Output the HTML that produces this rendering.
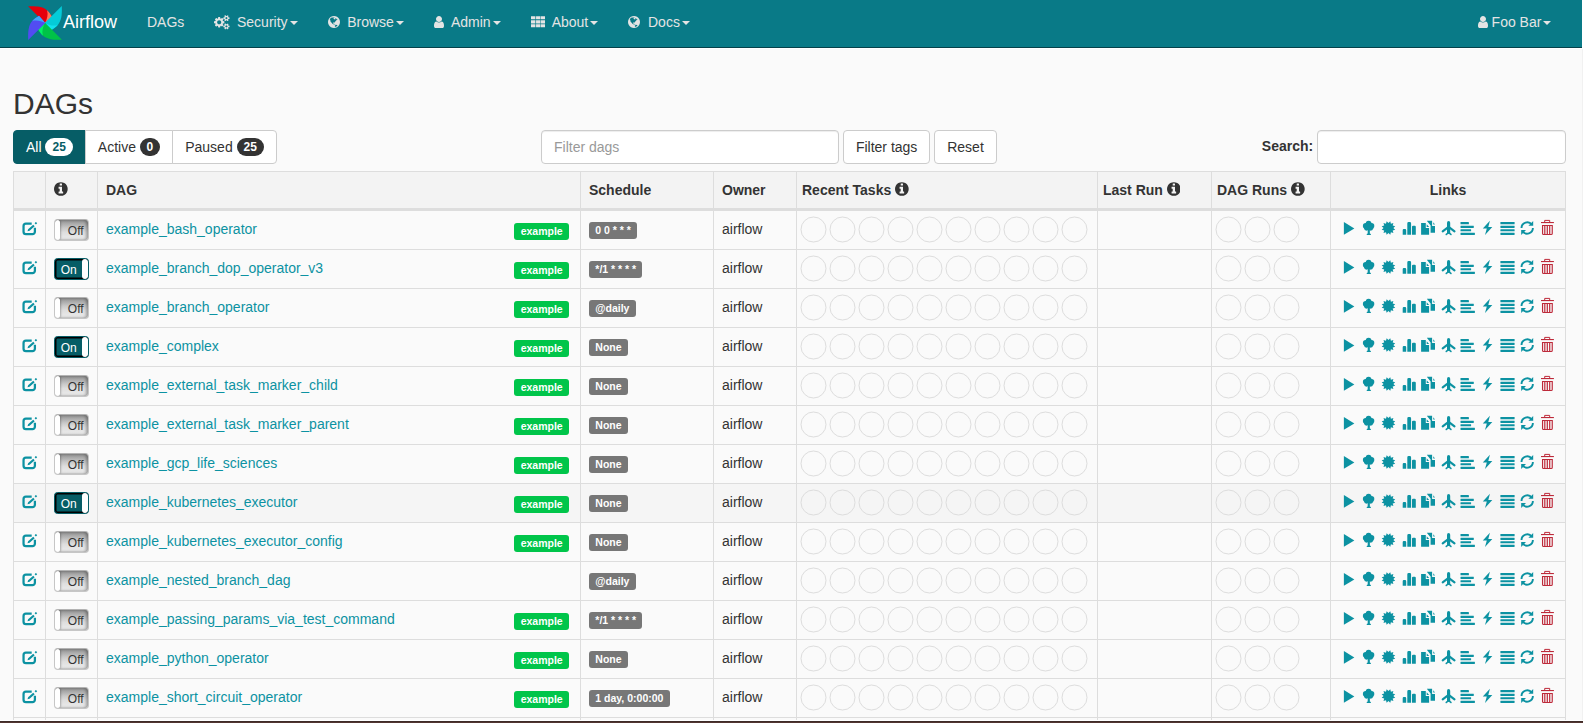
<!DOCTYPE html>
<html lang="en"><head><meta charset="utf-8"><title>Airflow - DAGs</title>
<style>
*{box-sizing:border-box}
html,body{margin:0;padding:0}
body{width:1583px;height:723px;overflow:hidden;background:#fafafa;font-family:"Liberation Sans","Helvetica Neue",Helvetica,Arial,sans-serif;font-size:14px;line-height:20px;color:#333;position:relative}
a{color:#0c92a2;text-decoration:none}
svg.ic{display:inline-block;fill:currentColor;vertical-align:middle}
.navbar{position:absolute;left:0;top:0;width:1582px;height:48px;background:#097a87;border-bottom:1px solid #05414a;box-shadow:0 1px 0 #fff}
.brand{position:absolute;left:28px;top:0;height:46px;color:#fff;font-size:18px;line-height:20px}
.brand .logo{position:absolute;left:-0.800px;top:4.600px;width:36px;height:36px}
.brand span{position:absolute;left:35px;top:12px}
.nav{list-style:none;margin:0;padding:0;position:absolute;top:0;left:0}
.nav li{position:absolute;top:0;white-space:nowrap}
.nav li a{display:block;color:#e4e4e4;line-height:20px;padding:12px 0 14px;font-size:14px}
.nav li a svg{margin-right:5px;position:relative;top:-1px}
.n1{left:147px}.n2{left:214px}.n3{left:327.600px}.n4{left:434.100px}.n5{left:530.700px}.n6{left:628.400px}
.nav .n2 svg{margin-right:7.460px;top:-0.800px}.nav .n3 svg{margin-right:7.600px}.nav .n4 svg{margin-right:6.800px}.nav .n5 svg{margin-right:6.700px;top:-1.500px}.nav .n6 svg{margin-right:7.600px}.nav .n7 svg{margin-right:3.800px}
.nav.right{left:auto}
.n7{left:1477.800px}
.caret{display:inline-block;width:0;height:0;margin-left:2px;vertical-align:middle;border-top:4px solid;border-right:4px solid transparent;border-left:4px solid transparent}
.wrap{position:absolute;left:13px;top:47px;width:1553px}
h2{font-size:30px;font-weight:500;line-height:33px;margin:0;position:absolute;left:0;top:40px;font-weight:normal;color:#333}
.bar{position:absolute;left:0;top:83px;width:1553px;height:34px}
.btn{display:inline-block;height:34px;padding:6px 12px;border:1px solid #ccc;background:#fff;color:#333;font-size:14px;line-height:20px;border-radius:4px;vertical-align:top;white-space:nowrap}
.btn-group{position:absolute;left:0;top:0;white-space:nowrap;font-size:0}
.btn-group .btn{border-radius:0;margin-left:-1px}
.btn-group .btn:first-child{border-radius:4px 0 0 4px;margin-left:0}
.btn-group .btn:last-child{border-radius:0 4px 4px 0}
.btn.primary{background:#065d66;border-color:#065d66;color:#fff}
.badge{display:inline-block;min-width:10px;padding:3px 7px;font-size:12px;font-weight:bold;color:#fff;line-height:12px;vertical-align:middle;background:#333;border-radius:10px;text-align:center;position:relative;top:-1px}
.badge.b0{padding:3px 6.550px}
.btn.pz{padding-left:12.600px;padding-right:12px}
.primary .badge{background:#fff;color:#065d66}
.filt{position:absolute;left:528px;top:0;white-space:nowrap}
.inp{display:inline-block;width:298px;height:34px;border:1px solid #ccc;border-radius:4px;background:#fff;padding:6px 12px;color:#999;vertical-align:top;box-shadow:inset 0 1px 1px rgba(0,0,0,.075)}
.ft{margin-left:3.890px}.rs{margin-left:3.890px}
.search{position:absolute;right:0;top:0;height:34px}
.search label{position:absolute;right:252.800px;top:6px;font-weight:bold;white-space:nowrap}
.inp2{position:absolute;right:0;top:0;width:249px;height:34px;border:1px solid #ccc;border-radius:4px;background:#fff;box-shadow:inset 0 1px 1px rgba(0,0,0,.075)}
table{position:absolute;left:0;top:124px;border-collapse:separate;border-spacing:0;table-layout:fixed;width:1553px;border-left:1px solid #ddd;border-bottom:1px solid #ddd}
th,td{border:0 solid #ddd;border-top-width:1px;border-right-width:1px;padding:8px 8px 0;text-align:left;vertical-align:top;line-height:20px;white-space:nowrap;overflow:hidden}
th{background:#f3f3f3;font-weight:bold;border-bottom:2px solid #ddd;height:39px}
th.tc{text-align:center}
th svg.ic{position:relative;top:-2px}
td{height:39px}
tr.hov td{background:#f5f5f5}
.c1 a{display:block;margin:2.500px 0 0 0;line-height:0}
.c1 svg{display:block}
.c3{position:relative}
.label{display:inline-block;font-size:10.500px;font-weight:bold;color:#fff;border-radius:3px;line-height:12px;padding:2px 6.300px 3px;white-space:nowrap}
.tag{position:absolute;right:11px;top:12px;background:#00c54a}
.sch{background:#777;margin-top:3px}
.tog{position:relative;width:35px;height:21.500px;border-radius:3.500px;margin:0;overflow:hidden;font-size:12px}
.tog.off{border:1px solid #c6c6c6;border-top-color:#b3b3b3;border-radius:4px;height:21.500px;background:linear-gradient(#8f8f8f 0%,#a6a6a6 15%,#c9c9c9 40%,#dedede 62%,#e7e7e7 85%,#e9e9e9 100%);box-shadow:inset -2px 0 3px rgba(0,0,0,.3),inset 0 -1px 1px rgba(0,0,0,.06)}
.tog.on{background:#065d66;border:1px solid #065d66;border-radius:3.500px;height:22px;box-shadow:inset 0 0 0 1.500px #000}
.tog .knob{position:absolute;top:0;width:6px;height:22px;background:#fff;border-radius:3px}
.tog.off .knob{left:0;top:0;width:5.200px;height:19.500px;box-shadow:1px 0 2px rgba(0,0,0,.25)}
.tog.on .knob{right:0;top:0;height:20px;width:6px;border-radius:3px}
.tog .tx{position:absolute;top:2px;line-height:20px;font-size:12px}
.tog.off .tx{left:12.800px;color:#333;top:1px}
.tog.on .tx{left:5.700px;color:#fff;top:1px}
.circs{display:block}
td.c6,td.c8{padding:0}
th.p5{padding-left:5px}
.circs circle{fill:none;stroke:#ddd;stroke-width:1}
.links{position:relative;height:20px}
.lk svg{position:absolute;display:block}
svg.trash{color:#bd2a3a;fill:#bd2a3a}
.rightcol{position:absolute;left:1582px;top:0;width:1px;height:721px;background:#f1f1f1;border-top:49px solid #fff}
.bottombar{position:absolute;left:0;top:720px;width:1583px;height:3px;background:linear-gradient(#fff 0,#fff 1px,#3f2c28 1px,#3f2c28 2px,#523531 2px)}

</style></head><body>
<nav class="navbar">
 <a class="brand"><svg class="logo" viewBox="-18 -18 36 36"><g transform="rotate(0)"><path d="M-16.900 -16.800C-12 -16.950 -8.500 -16.850 -5.700 -16.300C-2.500 -15.600 0 -14.500 1.900 -12.850C4 -11 5.700 -8.300 7.200 -6L0 0.300Z" fill="#e5000b"/><path d="M2.100 -12.650C4.100 -10.900 5.700 -8.300 7.200 -6L0 0.300C2 -3.500 3.400 -8 2.100 -12.650Z" fill="#ff7557"/></g><g transform="rotate(90)"><path d="M-16.900 -16.800C-12 -16.950 -8.500 -16.850 -5.700 -16.300C-2.500 -15.600 0 -14.500 1.900 -12.850C4 -11 5.700 -8.300 7.200 -6L0 0.300Z" fill="#04cbd8"/><path d="M2.100 -12.650C4.100 -10.900 5.700 -8.300 7.200 -6L0 0.300C2 -3.500 3.400 -8 2.100 -12.650Z" fill="#11e1ee"/></g><g transform="rotate(180)"><path d="M-16.900 -16.800C-12 -16.950 -8.500 -16.850 -5.700 -16.300C-2.500 -15.600 0 -14.500 1.900 -12.850C4 -11 5.700 -8.300 7.200 -6L0 0.300Z" fill="#00c248"/><path d="M2.100 -12.650C4.100 -10.900 5.700 -8.300 7.200 -6L0 0.300C2 -3.500 3.400 -8 2.100 -12.650Z" fill="#04f066"/></g><g transform="rotate(270)"><path d="M-16.900 -16.800C-12 -16.950 -8.500 -16.850 -5.700 -16.300C-2.500 -15.600 0 -14.500 1.900 -12.850C4 -11 5.700 -8.300 7.200 -6L0 0.300Z" fill="#524cf2"/><path d="M2.100 -12.650C4.100 -10.900 5.700 -8.300 7.200 -6L0 0.300C2 -3.500 3.400 -8 2.100 -12.650Z" fill="#41a7f9"/></g></svg><span>Airflow</span></a>
 <ul class="nav">
  <li class="n1"><a>DAGs</a></li>
  <li class="n2"><a><svg class="ic " style="width:15.54px;height:14.5px;" viewBox="0 -1536 1920 1792"><path transform="scale(1,-1) " d="M896 640q0 106 -75 181t-181 75t-181 -75t-75 -181t75 -181t181 -75t181 75t75 181zM1664 128q0 52 -38 90t-90 38t-90 -38t-38 -90q0 -53 37.5 -90.5t90.5 -37.5t90.5 37.5t37.5 90.5zM1664 1152q0 52 -38 90t-90 38t-90 -38t-38 -90q0 -53 37.5 -90.5t90.5 -37.5
t90.5 37.5t37.5 90.5zM1280 731v-185q0 -10 -7 -19.5t-16 -10.5l-155 -24q-11 -35 -32 -76q34 -48 90 -115q7 -11 7 -20q0 -12 -7 -19q-23 -30 -82.5 -89.5t-78.5 -59.5q-11 0 -21 7l-115 90q-37 -19 -77 -31q-11 -108 -23 -155q-7 -24 -30 -24h-186q-11 0 -20 7.5t-10 17.5
l-23 153q-34 10 -75 31l-118 -89q-7 -7 -20 -7q-11 0 -21 8q-144 133 -144 160q0 9 7 19q10 14 41 53t47 61q-23 44 -35 82l-152 24q-10 1 -17 9.5t-7 19.5v185q0 10 7 19.5t16 10.5l155 24q11 35 32 76q-34 48 -90 115q-7 11 -7 20q0 12 7 20q22 30 82 89t79 59q11 0 21 -7
l115 -90q34 18 77 32q11 108 23 154q7 24 30 24h186q11 0 20 -7.5t10 -17.5l23 -153q34 -10 75 -31l118 89q8 7 20 7q11 0 21 -8q144 -133 144 -160q0 -8 -7 -19q-12 -16 -42 -54t-45 -60q23 -48 34 -82l152 -23q10 -2 17 -10.5t7 -19.5zM1920 198v-140q0 -16 -149 -31
q-12 -27 -30 -52q51 -113 51 -138q0 -4 -4 -7q-122 -71 -124 -71q-8 0 -46 47t-52 68q-20 -2 -30 -2t-30 2q-14 -21 -52 -68t-46 -47q-2 0 -124 71q-4 3 -4 7q0 25 51 138q-18 25 -30 52q-149 15 -149 31v140q0 16 149 31q13 29 30 52q-51 113 -51 138q0 4 4 7q4 2 35 20
t59 34t30 16q8 0 46 -46.5t52 -67.5q20 2 30 2t30 -2q51 71 92 112l6 2q4 0 124 -70q4 -3 4 -7q0 -25 -51 -138q17 -23 30 -52q149 -15 149 -31zM1920 1222v-140q0 -16 -149 -31q-12 -27 -30 -52q51 -113 51 -138q0 -4 -4 -7q-122 -71 -124 -71q-8 0 -46 47t-52 68
q-20 -2 -30 -2t-30 2q-14 -21 -52 -68t-46 -47q-2 0 -124 71q-4 3 -4 7q0 25 51 138q-18 25 -30 52q-149 15 -149 31v140q0 16 149 31q13 29 30 52q-51 113 -51 138q0 4 4 7q4 2 35 20t59 34t30 16q8 0 46 -46.5t52 -67.5q20 2 30 2t30 -2q51 71 92 112l6 2q4 0 124 -70
q4 -3 4 -7q0 -25 -51 -138q17 -23 30 -52q149 -15 149 -31z"/></svg><span>Security</span><b class="caret"></b></a></li>
  <li class="n3"><a><svg class="ic " style="width:12.00px;height:14px;" viewBox="0 -1536 1536 1792"><path transform="scale(1,-1) " d="M768 1408q209 0 385.5 -103t279.5 -279.5t103 -385.5t-103 -385.5t-279.5 -279.5t-385.5 -103t-385.5 103t-279.5 279.5t-103 385.5t103 385.5t279.5 279.5t385.5 103zM1042 887q-2 -1 -9.5 -9.5t-13.5 -9.5q2 0 4.5 5t5 11t3.5 7q6 7 22 15q14 6 52 12q34 8 51 -11
q-2 2 9.5 13t14.5 12q3 2 15 4.5t15 7.5l2 22q-12 -1 -17.5 7t-6.5 21q0 -2 -6 -8q0 7 -4.5 8t-11.5 -1t-9 -1q-10 3 -15 7.5t-8 16.5t-4 15q-2 5 -9.5 11t-9.5 10q-1 2 -2.5 5.5t-3 6.5t-4 5.5t-5.5 2.5t-7 -5t-7.5 -10t-4.5 -5q-3 2 -6 1.5t-4.5 -1t-4.5 -3t-5 -3.5
q-3 -2 -8.5 -3t-8.5 -2q15 5 -1 11q-10 4 -16 3q9 4 7.5 12t-8.5 14h5q-1 4 -8.5 8.5t-17.5 8.5t-13 6q-8 5 -34 9.5t-33 0.5q-5 -6 -4.5 -10.5t4 -14t3.5 -12.5q1 -6 -5.5 -13t-6.5 -12q0 -7 14 -15.5t10 -21.5q-3 -8 -16 -16t-16 -12q-5 -8 -1.5 -18.5t10.5 -16.5
q2 -2 1.5 -4t-3.5 -4.5t-5.5 -4t-6.5 -3.5l-3 -2q-11 -5 -20.5 6t-13.5 26q-7 25 -16 30q-23 8 -29 -1q-5 13 -41 26q-25 9 -58 4q6 1 0 15q-7 15 -19 12q3 6 4 17.5t1 13.5q3 13 12 23q1 1 7 8.5t9.5 13.5t0.5 6q35 -4 50 11q5 5 11.5 17t10.5 17q9 6 14 5.5t14.5 -5.5
t14.5 -5q14 -1 15.5 11t-7.5 20q12 -1 3 17q-4 7 -8 9q-12 4 -27 -5q-8 -4 2 -8q-1 1 -9.5 -10.5t-16.5 -17.5t-16 5q-1 1 -5.5 13.5t-9.5 13.5q-8 0 -16 -15q3 8 -11 15t-24 8q19 12 -8 27q-7 4 -20.5 5t-19.5 -4q-5 -7 -5.5 -11.5t5 -8t10.5 -5.5t11.5 -4t8.5 -3
q14 -10 8 -14q-2 -1 -8.5 -3.5t-11.5 -4.5t-6 -4q-3 -4 0 -14t-2 -14q-5 5 -9 17.5t-7 16.5q7 -9 -25 -6l-10 1q-4 0 -16 -2t-20.5 -1t-13.5 8q-4 8 0 20q1 4 4 2q-4 3 -11 9.5t-10 8.5q-46 -15 -94 -41q6 -1 12 1q5 2 13 6.5t10 5.5q34 14 42 7l5 5q14 -16 20 -25
q-7 4 -30 1q-20 -6 -22 -12q7 -12 5 -18q-4 3 -11.5 10t-14.5 11t-15 5q-16 0 -22 -1q-146 -80 -235 -222q7 -7 12 -8q4 -1 5 -9t2.5 -11t11.5 3q9 -8 3 -19q1 1 44 -27q19 -17 21 -21q3 -11 -10 -18q-1 2 -9 9t-9 4q-3 -5 0.5 -18.5t10.5 -12.5q-7 0 -9.5 -16t-2.5 -35.5
t-1 -23.5l2 -1q-3 -12 5.5 -34.5t21.5 -19.5q-13 -3 20 -43q6 -8 8 -9q3 -2 12 -7.5t15 -10t10 -10.5q4 -5 10 -22.5t14 -23.5q-2 -6 9.5 -20t10.5 -23q-1 0 -2.5 -1t-2.5 -1q3 -7 15.5 -14t15.5 -13q1 -3 2 -10t3 -11t8 -2q2 20 -24 62q-15 25 -17 29q-3 5 -5.5 15.5
t-4.5 14.5q2 0 6 -1.5t8.5 -3.5t7.5 -4t2 -3q-3 -7 2 -17.5t12 -18.5t17 -19t12 -13q6 -6 14 -19.5t0 -13.5q9 0 20 -10.5t17 -19.5q5 -8 8 -26t5 -24q2 -7 8.5 -13.5t12.5 -9.5l16 -8t13 -7q5 -2 18.5 -10.5t21.5 -11.5q10 -4 16 -4t14.5 2.5t13.5 3.5q15 2 29 -15t21 -21
q36 -19 55 -11q-2 -1 0.5 -7.5t8 -15.5t9 -14.5t5.5 -8.5q5 -6 18 -15t18 -15q6 4 7 9q-3 -8 7 -20t18 -10q14 3 14 32q-31 -15 -49 18q0 1 -2.5 5.5t-4 8.5t-2.5 8.5t0 7.5t5 3q9 0 10 3.5t-2 12.5t-4 13q-1 8 -11 20t-12 15q-5 -9 -16 -8t-16 9q0 -1 -1.5 -5.5t-1.5 -6.5
q-13 0 -15 1q1 3 2.5 17.5t3.5 22.5q1 4 5.5 12t7.5 14.5t4 12.5t-4.5 9.5t-17.5 2.5q-19 -1 -26 -20q-1 -3 -3 -10.5t-5 -11.5t-9 -7q-7 -3 -24 -2t-24 5q-13 8 -22.5 29t-9.5 37q0 10 2.5 26.5t3 25t-5.5 24.5q3 2 9 9.5t10 10.5q2 1 4.5 1.5t4.5 0t4 1.5t3 6q-1 1 -4 3
q-3 3 -4 3q7 -3 28.5 1.5t27.5 -1.5q15 -11 22 2q0 1 -2.5 9.5t-0.5 13.5q5 -27 29 -9q3 -3 15.5 -5t17.5 -5q3 -2 7 -5.5t5.5 -4.5t5 0.5t8.5 6.5q10 -14 12 -24q11 -40 19 -44q7 -3 11 -2t4.5 9.5t0 14t-1.5 12.5l-1 8v18l-1 8q-15 3 -18.5 12t1.5 18.5t15 18.5q1 1 8 3.5
t15.5 6.5t12.5 8q21 19 15 35q7 0 11 9q-1 0 -5 3t-7.5 5t-4.5 2q9 5 2 16q5 3 7.5 11t7.5 10q9 -12 21 -2q8 8 1 16q5 7 20.5 10.5t18.5 9.5q7 -2 8 2t1 12t3 12q4 5 15 9t13 5l17 11q3 4 0 4q18 -2 31 11q10 11 -6 20q3 6 -3 9.5t-15 5.5q3 1 11.5 0.5t10.5 1.5
q15 10 -7 16q-17 5 -43 -12zM879 10q206 36 351 189q-3 3 -12.5 4.5t-12.5 3.5q-18 7 -24 8q1 7 -2.5 13t-8 9t-12.5 8t-11 7q-2 2 -7 6t-7 5.5t-7.5 4.5t-8.5 2t-10 -1l-3 -1q-3 -1 -5.5 -2.5t-5.5 -3t-4 -3t0 -2.5q-21 17 -36 22q-5 1 -11 5.5t-10.5 7t-10 1.5t-11.5 -7
q-5 -5 -6 -15t-2 -13q-7 5 0 17.5t2 18.5q-3 6 -10.5 4.5t-12 -4.5t-11.5 -8.5t-9 -6.5t-8.5 -5.5t-8.5 -7.5q-3 -4 -6 -12t-5 -11q-2 4 -11.5 6.5t-9.5 5.5q2 -10 4 -35t5 -38q7 -31 -12 -48q-27 -25 -29 -40q-4 -22 12 -26q0 -7 -8 -20.5t-7 -21.5q0 -6 2 -16z"/></svg><span>Browse</span><b class="caret"></b></a></li>
  <li class="n4"><a><svg class="ic " style="width:10.00px;height:14px;" viewBox="0 -1536 1280 1792"><path transform="scale(1,-1) " d="M1280 137q0 -109 -62.5 -187t-150.5 -78h-854q-88 0 -150.5 78t-62.5 187q0 85 8.5 160.5t31.5 152t58.5 131t94 89t134.5 34.5q131 -128 313 -128t313 128q76 0 134.5 -34.5t94 -89t58.5 -131t31.5 -152t8.5 -160.5zM1024 1024q0 -159 -112.5 -271.5t-271.5 -112.5
t-271.5 112.5t-112.5 271.5t112.5 271.5t271.5 112.5t271.5 -112.5t112.5 -271.5z"/></svg><span>Admin</span><b class="caret"></b></a></li>
  <li class="n5"><a><svg class="ic " style="width:14.3px;height:14px" viewBox="0 0 14.3 14"><path d="M0 1.3h4.4v3.05h-4.4zM5.05 1.3h4.4v3.05h-4.4zM9.95 1.3h4.35v3.05h-4.35zM0 5.15h4.4v3.25h-4.4zM5.05 5.15h4.4v3.25h-4.4zM9.95 5.15h4.35v3.25h-4.35zM0 9.2h4.4v3.1h-4.4zM5.05 9.2h4.4v3.1h-4.4zM9.95 9.2h4.35v3.1h-4.35z"/></svg><span>About</span><b class="caret"></b></a></li>
  <li class="n6"><a><svg class="ic " style="width:12.00px;height:14px;" viewBox="0 -1536 1536 1792"><path transform="scale(1,-1) " d="M768 1408q209 0 385.5 -103t279.5 -279.5t103 -385.5t-103 -385.5t-279.5 -279.5t-385.5 -103t-385.5 103t-279.5 279.5t-103 385.5t103 385.5t279.5 279.5t385.5 103zM1042 887q-2 -1 -9.5 -9.5t-13.5 -9.5q2 0 4.5 5t5 11t3.5 7q6 7 22 15q14 6 52 12q34 8 51 -11
q-2 2 9.5 13t14.5 12q3 2 15 4.5t15 7.5l2 22q-12 -1 -17.5 7t-6.5 21q0 -2 -6 -8q0 7 -4.5 8t-11.5 -1t-9 -1q-10 3 -15 7.5t-8 16.5t-4 15q-2 5 -9.5 11t-9.5 10q-1 2 -2.5 5.5t-3 6.5t-4 5.5t-5.5 2.5t-7 -5t-7.5 -10t-4.5 -5q-3 2 -6 1.5t-4.5 -1t-4.5 -3t-5 -3.5
q-3 -2 -8.5 -3t-8.5 -2q15 5 -1 11q-10 4 -16 3q9 4 7.5 12t-8.5 14h5q-1 4 -8.5 8.5t-17.5 8.5t-13 6q-8 5 -34 9.5t-33 0.5q-5 -6 -4.5 -10.5t4 -14t3.5 -12.5q1 -6 -5.5 -13t-6.5 -12q0 -7 14 -15.5t10 -21.5q-3 -8 -16 -16t-16 -12q-5 -8 -1.5 -18.5t10.5 -16.5
q2 -2 1.5 -4t-3.5 -4.5t-5.5 -4t-6.5 -3.5l-3 -2q-11 -5 -20.5 6t-13.5 26q-7 25 -16 30q-23 8 -29 -1q-5 13 -41 26q-25 9 -58 4q6 1 0 15q-7 15 -19 12q3 6 4 17.5t1 13.5q3 13 12 23q1 1 7 8.5t9.5 13.5t0.5 6q35 -4 50 11q5 5 11.5 17t10.5 17q9 6 14 5.5t14.5 -5.5
t14.5 -5q14 -1 15.5 11t-7.5 20q12 -1 3 17q-4 7 -8 9q-12 4 -27 -5q-8 -4 2 -8q-1 1 -9.5 -10.5t-16.5 -17.5t-16 5q-1 1 -5.5 13.5t-9.5 13.5q-8 0 -16 -15q3 8 -11 15t-24 8q19 12 -8 27q-7 4 -20.5 5t-19.5 -4q-5 -7 -5.5 -11.5t5 -8t10.5 -5.5t11.5 -4t8.5 -3
q14 -10 8 -14q-2 -1 -8.5 -3.5t-11.5 -4.5t-6 -4q-3 -4 0 -14t-2 -14q-5 5 -9 17.5t-7 16.5q7 -9 -25 -6l-10 1q-4 0 -16 -2t-20.5 -1t-13.5 8q-4 8 0 20q1 4 4 2q-4 3 -11 9.5t-10 8.5q-46 -15 -94 -41q6 -1 12 1q5 2 13 6.5t10 5.5q34 14 42 7l5 5q14 -16 20 -25
q-7 4 -30 1q-20 -6 -22 -12q7 -12 5 -18q-4 3 -11.5 10t-14.5 11t-15 5q-16 0 -22 -1q-146 -80 -235 -222q7 -7 12 -8q4 -1 5 -9t2.5 -11t11.5 3q9 -8 3 -19q1 1 44 -27q19 -17 21 -21q3 -11 -10 -18q-1 2 -9 9t-9 4q-3 -5 0.5 -18.5t10.5 -12.5q-7 0 -9.5 -16t-2.5 -35.5
t-1 -23.5l2 -1q-3 -12 5.5 -34.5t21.5 -19.5q-13 -3 20 -43q6 -8 8 -9q3 -2 12 -7.5t15 -10t10 -10.5q4 -5 10 -22.5t14 -23.5q-2 -6 9.5 -20t10.5 -23q-1 0 -2.5 -1t-2.5 -1q3 -7 15.5 -14t15.5 -13q1 -3 2 -10t3 -11t8 -2q2 20 -24 62q-15 25 -17 29q-3 5 -5.5 15.5
t-4.5 14.5q2 0 6 -1.5t8.5 -3.5t7.5 -4t2 -3q-3 -7 2 -17.5t12 -18.5t17 -19t12 -13q6 -6 14 -19.5t0 -13.5q9 0 20 -10.5t17 -19.5q5 -8 8 -26t5 -24q2 -7 8.5 -13.5t12.5 -9.5l16 -8t13 -7q5 -2 18.5 -10.5t21.5 -11.5q10 -4 16 -4t14.5 2.5t13.5 3.5q15 2 29 -15t21 -21
q36 -19 55 -11q-2 -1 0.5 -7.5t8 -15.5t9 -14.5t5.5 -8.5q5 -6 18 -15t18 -15q6 4 7 9q-3 -8 7 -20t18 -10q14 3 14 32q-31 -15 -49 18q0 1 -2.5 5.5t-4 8.5t-2.5 8.5t0 7.5t5 3q9 0 10 3.5t-2 12.5t-4 13q-1 8 -11 20t-12 15q-5 -9 -16 -8t-16 9q0 -1 -1.5 -5.5t-1.5 -6.5
q-13 0 -15 1q1 3 2.5 17.5t3.5 22.5q1 4 5.5 12t7.5 14.5t4 12.5t-4.5 9.5t-17.5 2.5q-19 -1 -26 -20q-1 -3 -3 -10.5t-5 -11.5t-9 -7q-7 -3 -24 -2t-24 5q-13 8 -22.5 29t-9.5 37q0 10 2.5 26.5t3 25t-5.5 24.5q3 2 9 9.5t10 10.5q2 1 4.5 1.5t4.5 0t4 1.5t3 6q-1 1 -4 3
q-3 3 -4 3q7 -3 28.5 1.5t27.5 -1.5q15 -11 22 2q0 1 -2.5 9.5t-0.5 13.5q5 -27 29 -9q3 -3 15.5 -5t17.5 -5q3 -2 7 -5.5t5.5 -4.5t5 0.5t8.5 6.5q10 -14 12 -24q11 -40 19 -44q7 -3 11 -2t4.5 9.5t0 14t-1.5 12.5l-1 8v18l-1 8q-15 3 -18.5 12t1.5 18.5t15 18.5q1 1 8 3.5
t15.5 6.5t12.5 8q21 19 15 35q7 0 11 9q-1 0 -5 3t-7.5 5t-4.5 2q9 5 2 16q5 3 7.5 11t7.5 10q9 -12 21 -2q8 8 1 16q5 7 20.5 10.5t18.5 9.5q7 -2 8 2t1 12t3 12q4 5 15 9t13 5l17 11q3 4 0 4q18 -2 31 11q10 11 -6 20q3 6 -3 9.5t-15 5.5q3 1 11.5 0.5t10.5 1.5
q15 10 -7 16q-17 5 -43 -12zM879 10q206 36 351 189q-3 3 -12.5 4.5t-12.5 3.5q-18 7 -24 8q1 7 -2.5 13t-8 9t-12.5 8t-11 7q-2 2 -7 6t-7 5.5t-7.5 4.5t-8.5 2t-10 -1l-3 -1q-3 -1 -5.5 -2.5t-5.5 -3t-4 -3t0 -2.5q-21 17 -36 22q-5 1 -11 5.5t-10.5 7t-10 1.5t-11.5 -7
q-5 -5 -6 -15t-2 -13q-7 5 0 17.5t2 18.5q-3 6 -10.5 4.5t-12 -4.5t-11.5 -8.5t-9 -6.5t-8.5 -5.5t-8.5 -7.5q-3 -4 -6 -12t-5 -11q-2 4 -11.5 6.5t-9.5 5.5q2 -10 4 -35t5 -38q7 -31 -12 -48q-27 -25 -29 -40q-4 -22 12 -26q0 -7 -8 -20.5t-7 -21.5q0 -6 2 -16z"/></svg><span>Docs</span><b class="caret"></b></a></li>
 </ul>
 <ul class="nav right"><li class="n7"><a><svg class="ic " style="width:10.00px;height:14px;" viewBox="0 -1536 1280 1792"><path transform="scale(1,-1) " d="M1280 137q0 -109 -62.5 -187t-150.5 -78h-854q-88 0 -150.5 78t-62.5 187q0 85 8.5 160.5t31.5 152t58.5 131t94 89t134.5 34.5q131 -128 313 -128t313 128q76 0 134.5 -34.5t94 -89t58.5 -131t31.5 -152t8.5 -160.5zM1024 1024q0 -159 -112.5 -271.5t-271.5 -112.5
t-271.5 112.5t-112.5 271.5t112.5 271.5t271.5 112.5t271.5 -112.5t112.5 -271.5z"/></svg><span>Foo Bar</span><b class="caret"></b></a></li></ul>
</nav>
<div class="wrap">
 <h2>DAGs</h2>
 <div class="bar">
  <div class="btn-group"><a class="btn primary">All <span class="badge">25</span></a><a class="btn">Active <span class="badge b0">0</span></a><a class="btn pz">Paused <span class="badge">25</span></a></div>
  <div class="filt"><div class="inp">Filter dags</div><a class="btn ft">Filter tags</a><a class="btn rs">Reset</a></div>
  <div class="search"><label>Search:</label><div class="inp2"></div></div>
 </div>
 <table>
  <colgroup><col style="width:32px"><col style="width:52px"><col style="width:483px"><col style="width:133px"><col style="width:83px"><col style="width:301px"><col style="width:114px"><col style="width:119px"><col style="width:235px"></colgroup>
  <thead><tr><th></th><th><svg class="ic " style="width:13.71px;height:16px;" viewBox="0 -1536 1536 1792"><path transform="scale(1,-1) " d="M1024 160v160q0 14 -9 23t-23 9h-96v512q0 14 -9 23t-23 9h-320q-14 0 -23 -9t-9 -23v-160q0 -14 9 -23t23 -9h96v-320h-96q-14 0 -23 -9t-9 -23v-160q0 -14 9 -23t23 -9h448q14 0 23 9t9 23zM896 1056v160q0 14 -9 23t-23 9h-192q-14 0 -23 -9t-9 -23v-160q0 -14 9 -23
t23 -9h192q14 0 23 9t9 23zM1536 640q0 -209 -103 -385.5t-279.5 -279.5t-385.5 -103t-385.5 103t-279.5 279.5t-103 385.5t103 385.5t279.5 279.5t385.5 103t385.5 -103t279.5 -279.5t103 -385.5z"/></svg></th><th>DAG</th><th>Schedule</th><th>Owner</th><th class="p5">Recent Tasks <svg class="ic " style="width:13.71px;height:16px;" viewBox="0 -1536 1536 1792"><path transform="scale(1,-1) " d="M1024 160v160q0 14 -9 23t-23 9h-96v512q0 14 -9 23t-23 9h-320q-14 0 -23 -9t-9 -23v-160q0 -14 9 -23t23 -9h96v-320h-96q-14 0 -23 -9t-9 -23v-160q0 -14 9 -23t23 -9h448q14 0 23 9t9 23zM896 1056v160q0 14 -9 23t-23 9h-192q-14 0 -23 -9t-9 -23v-160q0 -14 9 -23
t23 -9h192q14 0 23 9t9 23zM1536 640q0 -209 -103 -385.5t-279.5 -279.5t-385.5 -103t-385.5 103t-279.5 279.5t-103 385.5t103 385.5t279.5 279.5t385.5 103t385.5 -103t279.5 -279.5t103 -385.5z"/></svg></th><th class="p5">Last Run <svg class="ic " style="width:13.71px;height:16px;" viewBox="0 -1536 1536 1792"><path transform="scale(1,-1) " d="M1024 160v160q0 14 -9 23t-23 9h-96v512q0 14 -9 23t-23 9h-320q-14 0 -23 -9t-9 -23v-160q0 -14 9 -23t23 -9h96v-320h-96q-14 0 -23 -9t-9 -23v-160q0 -14 9 -23t23 -9h448q14 0 23 9t9 23zM896 1056v160q0 14 -9 23t-23 9h-192q-14 0 -23 -9t-9 -23v-160q0 -14 9 -23
t23 -9h192q14 0 23 9t9 23zM1536 640q0 -209 -103 -385.5t-279.5 -279.5t-385.5 -103t-385.5 103t-279.5 279.5t-103 385.5t103 385.5t279.5 279.5t385.5 103t385.5 -103t279.5 -279.5t103 -385.5z"/></svg></th><th class="p5">DAG Runs <svg class="ic " style="width:13.71px;height:16px;" viewBox="0 -1536 1536 1792"><path transform="scale(1,-1) " d="M1024 160v160q0 14 -9 23t-23 9h-96v512q0 14 -9 23t-23 9h-320q-14 0 -23 -9t-9 -23v-160q0 -14 9 -23t23 -9h96v-320h-96q-14 0 -23 -9t-9 -23v-160q0 -14 9 -23t23 -9h448q14 0 23 9t9 23zM896 1056v160q0 14 -9 23t-23 9h-192q-14 0 -23 -9t-9 -23v-160q0 -14 9 -23
t23 -9h192q14 0 23 9t9 23zM1536 640q0 -209 -103 -385.5t-279.5 -279.5t-385.5 -103t-385.5 103t-279.5 279.5t-103 385.5t103 385.5t279.5 279.5t385.5 103t385.5 -103t279.5 -279.5t103 -385.5z"/></svg></th><th class="tc">Links</th></tr></thead>
  <tbody>
<tr><td class="c1"><a><svg class="ic edit" style="width:16px;height:15px" viewBox="0 0 16 15"><path d="M9.700 1.550H3.950A2.400 2.400 0 0 0 1.550 3.950v5.750A2.400 2.400 0 0 0 3.950 12.100h6.550A2.400 2.400 0 0 0 12.900 9.700V5.700" fill="none" stroke="currentColor" stroke-width="2.250"/><path d="M5.500 9.200L6.100 7.200L11.200 2.700L12.700 4.300L7.600 8.800Z M13.900 -0.100L15.200 1.200L13.900 2.500L12.600 1.200Z"/></svg></a></td><td class="c2"><div class="tog off"><span class="knob"></span><span class="tx">Off</span></div></td><td class="c3"><a class="dag">example_bash_operator</a><span class="label tag">example</span></td><td class="c4"><span class="label sch">0 0 * * *</span></td><td class="c5">airflow</td><td class="c6"><svg class="circs" width="300" height="36" viewBox="0 0 300 36"><circle cx="16.5" cy="18.500" r="12.500"/><circle cx="45.5" cy="18.500" r="12.500"/><circle cx="74.5" cy="18.500" r="12.500"/><circle cx="103.5" cy="18.500" r="12.500"/><circle cx="132.5" cy="18.500" r="12.500"/><circle cx="161.5" cy="18.500" r="12.500"/><circle cx="190.5" cy="18.500" r="12.500"/><circle cx="219.5" cy="18.500" r="12.500"/><circle cx="248.5" cy="18.500" r="12.500"/><circle cx="277.5" cy="18.500" r="12.500"/></svg></td><td class="c7"></td><td class="c8"><svg class="circs" width="100" height="36" viewBox="0 0 100 36"><circle cx="16.5" cy="18.500" r="12.500"/><circle cx="45.5" cy="18.500" r="12.500"/><circle cx="74.5" cy="18.500" r="12.500"/></svg></td><td class="c9"><div class="links"><a class="lk"><svg class="ic " style="left:4px;top:1px;width:16px;height:16px" viewBox="1343 220 16 16"><path d="M1343.900 222.100L1354.350 228.450L1343.900 234.800Z"/></svg></a><a class="lk"><svg class="ic " style="left:23px;top:1px;width:16px;height:16px" viewBox="1362 220 16 16"><circle cx="1368.600" cy="223.700" r="2.900"/><circle cx="1365.700" cy="225.900" r="2.800"/><circle cx="1371.500" cy="225.900" r="2.800"/><circle cx="1366.500" cy="228.300" r="2.400"/><circle cx="1370.700" cy="228.300" r="2.400"/><circle cx="1368.600" cy="226.500" r="3.600"/><path d="M1367.700 229.500H1369.850V233.500L1370.850 233.900V234.950H1366.750V233.900L1367.700 233.500Z"/></svg></a><a class="lk"><svg class="ic " style="left:42px;top:1px;width:16px;height:16px" viewBox="1381 220 16 16"><polygon points="1390.26,221.24 1390.90,223.76 1393.40,223.05 1392.69,225.55 1395.21,226.19 1393.35,228.00 1395.21,229.81 1392.69,230.45 1393.40,232.95 1390.90,232.24 1390.26,234.76 1388.45,232.90 1386.64,234.76 1386.00,232.24 1383.50,232.95 1384.21,230.45 1381.69,229.81 1383.55,228.00 1381.69,226.19 1384.21,225.55 1383.50,223.05 1386.00,223.76 1386.64,221.24 1388.45,223.10"/></svg></a><a class="lk"><svg class="ic " style="left:63px;top:1px;width:16px;height:16px" viewBox="1402 220 16 16"><path d="M1402.700 234.800v-4.600a1.100 1.100 0 0 1 1.100-1.100h1.300a1.100 1.100 0 0 1 1.100 1.100v4.600z M1407.300 234.800v-11.400a1.300 1.300 0 0 1 1.300-1.300h1.200a1.300 1.300 0 0 1 1.300 1.300v11.400z M1412 234.800v-8a1.100 1.100 0 0 1 1.100-1.100h1.600a1.100 1.100 0 0 1 1.100 1.100v8z"/></svg></a><a class="lk"><svg class="ic " style="left:81px;top:1px;width:16px;height:16px" viewBox="1420 220 16 16"><path d="M1421.100 223.100h4.700v4.900h3.300v6.800h-8z M1426.700 224.200l2.400 2.900h-2.400z M1427 220.800H1432.100V226H1435V232.700H1430.600V225.600L1427 221.100z M1433.300 222.200l1.700 2.300h-1.700z"/></svg></a><a class="lk"><svg class="ic " style="left:102px;top:1px;width:16px;height:16px" viewBox="1441 220 16 16"><rect x="1447" y="221.100" width="3.200" height="12.700" rx="1.600"/><path d="M1448.600 226.800L1442.700 231.400M1448.600 226.800L1454.500 231.400" fill="none" stroke="currentColor" stroke-width="2.100" stroke-linecap="round"/><path d="M1448.600 232.700L1446.300 234.400M1448.600 232.700L1450.900 234.400" fill="none" stroke="currentColor" stroke-width="1.600" stroke-linecap="round"/></svg></a><a class="lk"><svg class="ic " style="left:121px;top:1px;width:16px;height:16px" viewBox="1460 220 16 16"><rect x="1460.5" y="222.1" width="8.4" height="2.200" rx="0.35"/><rect x="1460.5" y="225.75" width="13.3" height="2.200" rx="0.35"/><rect x="1460.5" y="229.15" width="10.6" height="2.200" rx="0.35"/><rect x="1460.5" y="232.75" width="14.4" height="2.200" rx="0.35"/></svg></a><a class="lk"><svg class="ic " style="left:143px;top:1px;width:16px;height:16px" viewBox="1482 220 16 16"><path d="M1489.900 220.800L1482.800 228.500H1486.800L1485 235.100L1492.300 226.900H1488.300z"/></svg></a><a class="lk"><svg class="ic " style="left:161px;top:1px;width:16px;height:16px" viewBox="1500 220 16 16"><rect x="1500.4" y="222.1" width="14.2" height="2.200" rx="0.35"/><rect x="1500.4" y="225.75" width="14.2" height="2.200" rx="0.35"/><rect x="1500.4" y="229.15" width="14.2" height="2.200" rx="0.35"/><rect x="1500.4" y="232.75" width="14.2" height="2.200" rx="0.35"/></svg></a><a class="lk"><svg class="ic " style="left:181px;top:1px;width:16px;height:16px" viewBox="1520 220 16 16"><path d="M1521.500 227.900a5.700 5.700 0 0 1 10.300-3.300" fill="none" stroke="currentColor" stroke-width="1.900"/><path d="M1533.200 221v4.800h-4.800z"/><path d="M1532.900 228a5.700 5.700 0 0 1-10.300 3.300" fill="none" stroke="currentColor" stroke-width="1.900"/><path d="M1521.200 234.900v-4.800h4.800z"/></svg></a><a class="lk"><svg class="ic trash" style="left:201px;top:0px;width:16px;height:17px" viewBox="1540 219 16 17"><path d="M1544.700 222.400v-2h5v2" fill="none" stroke="currentColor" stroke-width="1"/><rect x="1541" y="222" width="12.900" height="1.100"/><path d="M1542.550 225.450h9.700v8a1 1 0 0 1-1 1h-7.700a1 1 0 0 1-1-1z" fill="none" stroke="currentColor" stroke-width="1.150"/><path d="M1544.800 225.500v9M1547.300 225.500v9M1549.700 225.500v9" fill="none" stroke="currentColor" stroke-width="1.200"/></svg></a></div></td></tr>
<tr><td class="c1"><a><svg class="ic edit" style="width:16px;height:15px" viewBox="0 0 16 15"><path d="M9.700 1.550H3.950A2.400 2.400 0 0 0 1.550 3.950v5.750A2.400 2.400 0 0 0 3.950 12.100h6.550A2.400 2.400 0 0 0 12.900 9.700V5.700" fill="none" stroke="currentColor" stroke-width="2.250"/><path d="M5.500 9.200L6.100 7.200L11.200 2.700L12.700 4.300L7.600 8.800Z M13.900 -0.100L15.200 1.200L13.900 2.500L12.600 1.200Z"/></svg></a></td><td class="c2"><div class="tog on"><span class="knob"></span><span class="tx">On</span></div></td><td class="c3"><a class="dag">example_branch_dop_operator_v3</a><span class="label tag">example</span></td><td class="c4"><span class="label sch">*/1 * * * *</span></td><td class="c5">airflow</td><td class="c6"><svg class="circs" width="300" height="36" viewBox="0 0 300 36"><circle cx="16.5" cy="18.500" r="12.500"/><circle cx="45.5" cy="18.500" r="12.500"/><circle cx="74.5" cy="18.500" r="12.500"/><circle cx="103.5" cy="18.500" r="12.500"/><circle cx="132.5" cy="18.500" r="12.500"/><circle cx="161.5" cy="18.500" r="12.500"/><circle cx="190.5" cy="18.500" r="12.500"/><circle cx="219.5" cy="18.500" r="12.500"/><circle cx="248.5" cy="18.500" r="12.500"/><circle cx="277.5" cy="18.500" r="12.500"/></svg></td><td class="c7"></td><td class="c8"><svg class="circs" width="100" height="36" viewBox="0 0 100 36"><circle cx="16.5" cy="18.500" r="12.500"/><circle cx="45.5" cy="18.500" r="12.500"/><circle cx="74.5" cy="18.500" r="12.500"/></svg></td><td class="c9"><div class="links"><a class="lk"><svg class="ic " style="left:4px;top:1px;width:16px;height:16px" viewBox="1343 220 16 16"><path d="M1343.900 222.100L1354.350 228.450L1343.900 234.800Z"/></svg></a><a class="lk"><svg class="ic " style="left:23px;top:1px;width:16px;height:16px" viewBox="1362 220 16 16"><circle cx="1368.600" cy="223.700" r="2.900"/><circle cx="1365.700" cy="225.900" r="2.800"/><circle cx="1371.500" cy="225.900" r="2.800"/><circle cx="1366.500" cy="228.300" r="2.400"/><circle cx="1370.700" cy="228.300" r="2.400"/><circle cx="1368.600" cy="226.500" r="3.600"/><path d="M1367.700 229.500H1369.850V233.500L1370.850 233.900V234.950H1366.750V233.900L1367.700 233.500Z"/></svg></a><a class="lk"><svg class="ic " style="left:42px;top:1px;width:16px;height:16px" viewBox="1381 220 16 16"><polygon points="1390.26,221.24 1390.90,223.76 1393.40,223.05 1392.69,225.55 1395.21,226.19 1393.35,228.00 1395.21,229.81 1392.69,230.45 1393.40,232.95 1390.90,232.24 1390.26,234.76 1388.45,232.90 1386.64,234.76 1386.00,232.24 1383.50,232.95 1384.21,230.45 1381.69,229.81 1383.55,228.00 1381.69,226.19 1384.21,225.55 1383.50,223.05 1386.00,223.76 1386.64,221.24 1388.45,223.10"/></svg></a><a class="lk"><svg class="ic " style="left:63px;top:1px;width:16px;height:16px" viewBox="1402 220 16 16"><path d="M1402.700 234.800v-4.600a1.100 1.100 0 0 1 1.100-1.100h1.300a1.100 1.100 0 0 1 1.100 1.100v4.600z M1407.300 234.800v-11.400a1.300 1.300 0 0 1 1.300-1.300h1.200a1.300 1.300 0 0 1 1.300 1.300v11.400z M1412 234.800v-8a1.100 1.100 0 0 1 1.100-1.100h1.600a1.100 1.100 0 0 1 1.100 1.100v8z"/></svg></a><a class="lk"><svg class="ic " style="left:81px;top:1px;width:16px;height:16px" viewBox="1420 220 16 16"><path d="M1421.100 223.100h4.700v4.900h3.300v6.800h-8z M1426.700 224.200l2.400 2.900h-2.400z M1427 220.800H1432.100V226H1435V232.700H1430.600V225.600L1427 221.100z M1433.300 222.200l1.700 2.300h-1.700z"/></svg></a><a class="lk"><svg class="ic " style="left:102px;top:1px;width:16px;height:16px" viewBox="1441 220 16 16"><rect x="1447" y="221.100" width="3.200" height="12.700" rx="1.600"/><path d="M1448.600 226.800L1442.700 231.400M1448.600 226.800L1454.500 231.400" fill="none" stroke="currentColor" stroke-width="2.100" stroke-linecap="round"/><path d="M1448.600 232.700L1446.300 234.400M1448.600 232.700L1450.900 234.400" fill="none" stroke="currentColor" stroke-width="1.600" stroke-linecap="round"/></svg></a><a class="lk"><svg class="ic " style="left:121px;top:1px;width:16px;height:16px" viewBox="1460 220 16 16"><rect x="1460.5" y="222.1" width="8.4" height="2.200" rx="0.35"/><rect x="1460.5" y="225.75" width="13.3" height="2.200" rx="0.35"/><rect x="1460.5" y="229.15" width="10.6" height="2.200" rx="0.35"/><rect x="1460.5" y="232.75" width="14.4" height="2.200" rx="0.35"/></svg></a><a class="lk"><svg class="ic " style="left:143px;top:1px;width:16px;height:16px" viewBox="1482 220 16 16"><path d="M1489.900 220.800L1482.800 228.500H1486.800L1485 235.100L1492.300 226.900H1488.300z"/></svg></a><a class="lk"><svg class="ic " style="left:161px;top:1px;width:16px;height:16px" viewBox="1500 220 16 16"><rect x="1500.4" y="222.1" width="14.2" height="2.200" rx="0.35"/><rect x="1500.4" y="225.75" width="14.2" height="2.200" rx="0.35"/><rect x="1500.4" y="229.15" width="14.2" height="2.200" rx="0.35"/><rect x="1500.4" y="232.75" width="14.2" height="2.200" rx="0.35"/></svg></a><a class="lk"><svg class="ic " style="left:181px;top:1px;width:16px;height:16px" viewBox="1520 220 16 16"><path d="M1521.500 227.900a5.700 5.700 0 0 1 10.300-3.300" fill="none" stroke="currentColor" stroke-width="1.900"/><path d="M1533.200 221v4.800h-4.800z"/><path d="M1532.900 228a5.700 5.700 0 0 1-10.300 3.300" fill="none" stroke="currentColor" stroke-width="1.900"/><path d="M1521.200 234.900v-4.800h4.800z"/></svg></a><a class="lk"><svg class="ic trash" style="left:201px;top:0px;width:16px;height:17px" viewBox="1540 219 16 17"><path d="M1544.700 222.400v-2h5v2" fill="none" stroke="currentColor" stroke-width="1"/><rect x="1541" y="222" width="12.900" height="1.100"/><path d="M1542.550 225.450h9.700v8a1 1 0 0 1-1 1h-7.700a1 1 0 0 1-1-1z" fill="none" stroke="currentColor" stroke-width="1.150"/><path d="M1544.800 225.500v9M1547.300 225.500v9M1549.700 225.500v9" fill="none" stroke="currentColor" stroke-width="1.200"/></svg></a></div></td></tr>
<tr><td class="c1"><a><svg class="ic edit" style="width:16px;height:15px" viewBox="0 0 16 15"><path d="M9.700 1.550H3.950A2.400 2.400 0 0 0 1.550 3.950v5.750A2.400 2.400 0 0 0 3.950 12.100h6.550A2.400 2.400 0 0 0 12.900 9.700V5.700" fill="none" stroke="currentColor" stroke-width="2.250"/><path d="M5.500 9.200L6.100 7.200L11.200 2.700L12.700 4.300L7.600 8.800Z M13.900 -0.100L15.200 1.200L13.900 2.500L12.600 1.200Z"/></svg></a></td><td class="c2"><div class="tog off"><span class="knob"></span><span class="tx">Off</span></div></td><td class="c3"><a class="dag">example_branch_operator</a><span class="label tag">example</span></td><td class="c4"><span class="label sch">@daily</span></td><td class="c5">airflow</td><td class="c6"><svg class="circs" width="300" height="36" viewBox="0 0 300 36"><circle cx="16.5" cy="18.500" r="12.500"/><circle cx="45.5" cy="18.500" r="12.500"/><circle cx="74.5" cy="18.500" r="12.500"/><circle cx="103.5" cy="18.500" r="12.500"/><circle cx="132.5" cy="18.500" r="12.500"/><circle cx="161.5" cy="18.500" r="12.500"/><circle cx="190.5" cy="18.500" r="12.500"/><circle cx="219.5" cy="18.500" r="12.500"/><circle cx="248.5" cy="18.500" r="12.500"/><circle cx="277.5" cy="18.500" r="12.500"/></svg></td><td class="c7"></td><td class="c8"><svg class="circs" width="100" height="36" viewBox="0 0 100 36"><circle cx="16.5" cy="18.500" r="12.500"/><circle cx="45.5" cy="18.500" r="12.500"/><circle cx="74.5" cy="18.500" r="12.500"/></svg></td><td class="c9"><div class="links"><a class="lk"><svg class="ic " style="left:4px;top:1px;width:16px;height:16px" viewBox="1343 220 16 16"><path d="M1343.900 222.100L1354.350 228.450L1343.900 234.800Z"/></svg></a><a class="lk"><svg class="ic " style="left:23px;top:1px;width:16px;height:16px" viewBox="1362 220 16 16"><circle cx="1368.600" cy="223.700" r="2.900"/><circle cx="1365.700" cy="225.900" r="2.800"/><circle cx="1371.500" cy="225.900" r="2.800"/><circle cx="1366.500" cy="228.300" r="2.400"/><circle cx="1370.700" cy="228.300" r="2.400"/><circle cx="1368.600" cy="226.500" r="3.600"/><path d="M1367.700 229.500H1369.850V233.500L1370.850 233.900V234.950H1366.750V233.900L1367.700 233.500Z"/></svg></a><a class="lk"><svg class="ic " style="left:42px;top:1px;width:16px;height:16px" viewBox="1381 220 16 16"><polygon points="1390.26,221.24 1390.90,223.76 1393.40,223.05 1392.69,225.55 1395.21,226.19 1393.35,228.00 1395.21,229.81 1392.69,230.45 1393.40,232.95 1390.90,232.24 1390.26,234.76 1388.45,232.90 1386.64,234.76 1386.00,232.24 1383.50,232.95 1384.21,230.45 1381.69,229.81 1383.55,228.00 1381.69,226.19 1384.21,225.55 1383.50,223.05 1386.00,223.76 1386.64,221.24 1388.45,223.10"/></svg></a><a class="lk"><svg class="ic " style="left:63px;top:1px;width:16px;height:16px" viewBox="1402 220 16 16"><path d="M1402.700 234.800v-4.600a1.100 1.100 0 0 1 1.100-1.100h1.300a1.100 1.100 0 0 1 1.100 1.100v4.600z M1407.300 234.800v-11.400a1.300 1.300 0 0 1 1.300-1.300h1.200a1.300 1.300 0 0 1 1.300 1.300v11.400z M1412 234.800v-8a1.100 1.100 0 0 1 1.100-1.100h1.600a1.100 1.100 0 0 1 1.100 1.100v8z"/></svg></a><a class="lk"><svg class="ic " style="left:81px;top:1px;width:16px;height:16px" viewBox="1420 220 16 16"><path d="M1421.100 223.100h4.700v4.900h3.300v6.800h-8z M1426.700 224.200l2.400 2.900h-2.400z M1427 220.800H1432.100V226H1435V232.700H1430.600V225.600L1427 221.100z M1433.300 222.200l1.700 2.300h-1.700z"/></svg></a><a class="lk"><svg class="ic " style="left:102px;top:1px;width:16px;height:16px" viewBox="1441 220 16 16"><rect x="1447" y="221.100" width="3.200" height="12.700" rx="1.600"/><path d="M1448.600 226.800L1442.700 231.400M1448.600 226.800L1454.500 231.400" fill="none" stroke="currentColor" stroke-width="2.100" stroke-linecap="round"/><path d="M1448.600 232.700L1446.300 234.400M1448.600 232.700L1450.900 234.400" fill="none" stroke="currentColor" stroke-width="1.600" stroke-linecap="round"/></svg></a><a class="lk"><svg class="ic " style="left:121px;top:1px;width:16px;height:16px" viewBox="1460 220 16 16"><rect x="1460.5" y="222.1" width="8.4" height="2.200" rx="0.35"/><rect x="1460.5" y="225.75" width="13.3" height="2.200" rx="0.35"/><rect x="1460.5" y="229.15" width="10.6" height="2.200" rx="0.35"/><rect x="1460.5" y="232.75" width="14.4" height="2.200" rx="0.35"/></svg></a><a class="lk"><svg class="ic " style="left:143px;top:1px;width:16px;height:16px" viewBox="1482 220 16 16"><path d="M1489.900 220.800L1482.800 228.500H1486.800L1485 235.100L1492.300 226.900H1488.300z"/></svg></a><a class="lk"><svg class="ic " style="left:161px;top:1px;width:16px;height:16px" viewBox="1500 220 16 16"><rect x="1500.4" y="222.1" width="14.2" height="2.200" rx="0.35"/><rect x="1500.4" y="225.75" width="14.2" height="2.200" rx="0.35"/><rect x="1500.4" y="229.15" width="14.2" height="2.200" rx="0.35"/><rect x="1500.4" y="232.75" width="14.2" height="2.200" rx="0.35"/></svg></a><a class="lk"><svg class="ic " style="left:181px;top:1px;width:16px;height:16px" viewBox="1520 220 16 16"><path d="M1521.500 227.900a5.700 5.700 0 0 1 10.300-3.300" fill="none" stroke="currentColor" stroke-width="1.900"/><path d="M1533.200 221v4.800h-4.800z"/><path d="M1532.900 228a5.700 5.700 0 0 1-10.300 3.300" fill="none" stroke="currentColor" stroke-width="1.900"/><path d="M1521.200 234.900v-4.800h4.800z"/></svg></a><a class="lk"><svg class="ic trash" style="left:201px;top:0px;width:16px;height:17px" viewBox="1540 219 16 17"><path d="M1544.700 222.400v-2h5v2" fill="none" stroke="currentColor" stroke-width="1"/><rect x="1541" y="222" width="12.900" height="1.100"/><path d="M1542.550 225.450h9.700v8a1 1 0 0 1-1 1h-7.700a1 1 0 0 1-1-1z" fill="none" stroke="currentColor" stroke-width="1.150"/><path d="M1544.800 225.500v9M1547.300 225.500v9M1549.700 225.500v9" fill="none" stroke="currentColor" stroke-width="1.200"/></svg></a></div></td></tr>
<tr><td class="c1"><a><svg class="ic edit" style="width:16px;height:15px" viewBox="0 0 16 15"><path d="M9.700 1.550H3.950A2.400 2.400 0 0 0 1.550 3.950v5.750A2.400 2.400 0 0 0 3.950 12.100h6.550A2.400 2.400 0 0 0 12.900 9.700V5.700" fill="none" stroke="currentColor" stroke-width="2.250"/><path d="M5.500 9.200L6.100 7.200L11.200 2.700L12.700 4.300L7.600 8.800Z M13.900 -0.100L15.200 1.200L13.900 2.500L12.600 1.200Z"/></svg></a></td><td class="c2"><div class="tog on"><span class="knob"></span><span class="tx">On</span></div></td><td class="c3"><a class="dag">example_complex</a><span class="label tag">example</span></td><td class="c4"><span class="label sch">None</span></td><td class="c5">airflow</td><td class="c6"><svg class="circs" width="300" height="36" viewBox="0 0 300 36"><circle cx="16.5" cy="18.500" r="12.500"/><circle cx="45.5" cy="18.500" r="12.500"/><circle cx="74.5" cy="18.500" r="12.500"/><circle cx="103.5" cy="18.500" r="12.500"/><circle cx="132.5" cy="18.500" r="12.500"/><circle cx="161.5" cy="18.500" r="12.500"/><circle cx="190.5" cy="18.500" r="12.500"/><circle cx="219.5" cy="18.500" r="12.500"/><circle cx="248.5" cy="18.500" r="12.500"/><circle cx="277.5" cy="18.500" r="12.500"/></svg></td><td class="c7"></td><td class="c8"><svg class="circs" width="100" height="36" viewBox="0 0 100 36"><circle cx="16.5" cy="18.500" r="12.500"/><circle cx="45.5" cy="18.500" r="12.500"/><circle cx="74.5" cy="18.500" r="12.500"/></svg></td><td class="c9"><div class="links"><a class="lk"><svg class="ic " style="left:4px;top:1px;width:16px;height:16px" viewBox="1343 220 16 16"><path d="M1343.900 222.100L1354.350 228.450L1343.900 234.800Z"/></svg></a><a class="lk"><svg class="ic " style="left:23px;top:1px;width:16px;height:16px" viewBox="1362 220 16 16"><circle cx="1368.600" cy="223.700" r="2.900"/><circle cx="1365.700" cy="225.900" r="2.800"/><circle cx="1371.500" cy="225.900" r="2.800"/><circle cx="1366.500" cy="228.300" r="2.400"/><circle cx="1370.700" cy="228.300" r="2.400"/><circle cx="1368.600" cy="226.500" r="3.600"/><path d="M1367.700 229.500H1369.850V233.500L1370.850 233.900V234.950H1366.750V233.900L1367.700 233.500Z"/></svg></a><a class="lk"><svg class="ic " style="left:42px;top:1px;width:16px;height:16px" viewBox="1381 220 16 16"><polygon points="1390.26,221.24 1390.90,223.76 1393.40,223.05 1392.69,225.55 1395.21,226.19 1393.35,228.00 1395.21,229.81 1392.69,230.45 1393.40,232.95 1390.90,232.24 1390.26,234.76 1388.45,232.90 1386.64,234.76 1386.00,232.24 1383.50,232.95 1384.21,230.45 1381.69,229.81 1383.55,228.00 1381.69,226.19 1384.21,225.55 1383.50,223.05 1386.00,223.76 1386.64,221.24 1388.45,223.10"/></svg></a><a class="lk"><svg class="ic " style="left:63px;top:1px;width:16px;height:16px" viewBox="1402 220 16 16"><path d="M1402.700 234.800v-4.600a1.100 1.100 0 0 1 1.100-1.100h1.300a1.100 1.100 0 0 1 1.100 1.100v4.600z M1407.300 234.800v-11.400a1.300 1.300 0 0 1 1.300-1.300h1.200a1.300 1.300 0 0 1 1.300 1.300v11.400z M1412 234.800v-8a1.100 1.100 0 0 1 1.100-1.100h1.600a1.100 1.100 0 0 1 1.100 1.100v8z"/></svg></a><a class="lk"><svg class="ic " style="left:81px;top:1px;width:16px;height:16px" viewBox="1420 220 16 16"><path d="M1421.100 223.100h4.700v4.900h3.300v6.800h-8z M1426.700 224.200l2.400 2.900h-2.400z M1427 220.800H1432.100V226H1435V232.700H1430.600V225.600L1427 221.100z M1433.300 222.200l1.700 2.300h-1.700z"/></svg></a><a class="lk"><svg class="ic " style="left:102px;top:1px;width:16px;height:16px" viewBox="1441 220 16 16"><rect x="1447" y="221.100" width="3.200" height="12.700" rx="1.600"/><path d="M1448.600 226.800L1442.700 231.400M1448.600 226.800L1454.500 231.400" fill="none" stroke="currentColor" stroke-width="2.100" stroke-linecap="round"/><path d="M1448.600 232.700L1446.300 234.400M1448.600 232.700L1450.900 234.400" fill="none" stroke="currentColor" stroke-width="1.600" stroke-linecap="round"/></svg></a><a class="lk"><svg class="ic " style="left:121px;top:1px;width:16px;height:16px" viewBox="1460 220 16 16"><rect x="1460.5" y="222.1" width="8.4" height="2.200" rx="0.35"/><rect x="1460.5" y="225.75" width="13.3" height="2.200" rx="0.35"/><rect x="1460.5" y="229.15" width="10.6" height="2.200" rx="0.35"/><rect x="1460.5" y="232.75" width="14.4" height="2.200" rx="0.35"/></svg></a><a class="lk"><svg class="ic " style="left:143px;top:1px;width:16px;height:16px" viewBox="1482 220 16 16"><path d="M1489.900 220.800L1482.800 228.500H1486.800L1485 235.100L1492.300 226.900H1488.300z"/></svg></a><a class="lk"><svg class="ic " style="left:161px;top:1px;width:16px;height:16px" viewBox="1500 220 16 16"><rect x="1500.4" y="222.1" width="14.2" height="2.200" rx="0.35"/><rect x="1500.4" y="225.75" width="14.2" height="2.200" rx="0.35"/><rect x="1500.4" y="229.15" width="14.2" height="2.200" rx="0.35"/><rect x="1500.4" y="232.75" width="14.2" height="2.200" rx="0.35"/></svg></a><a class="lk"><svg class="ic " style="left:181px;top:1px;width:16px;height:16px" viewBox="1520 220 16 16"><path d="M1521.500 227.900a5.700 5.700 0 0 1 10.300-3.300" fill="none" stroke="currentColor" stroke-width="1.900"/><path d="M1533.200 221v4.800h-4.800z"/><path d="M1532.900 228a5.700 5.700 0 0 1-10.300 3.300" fill="none" stroke="currentColor" stroke-width="1.900"/><path d="M1521.200 234.900v-4.800h4.800z"/></svg></a><a class="lk"><svg class="ic trash" style="left:201px;top:0px;width:16px;height:17px" viewBox="1540 219 16 17"><path d="M1544.700 222.400v-2h5v2" fill="none" stroke="currentColor" stroke-width="1"/><rect x="1541" y="222" width="12.900" height="1.100"/><path d="M1542.550 225.450h9.700v8a1 1 0 0 1-1 1h-7.700a1 1 0 0 1-1-1z" fill="none" stroke="currentColor" stroke-width="1.150"/><path d="M1544.800 225.500v9M1547.300 225.500v9M1549.700 225.500v9" fill="none" stroke="currentColor" stroke-width="1.200"/></svg></a></div></td></tr>
<tr><td class="c1"><a><svg class="ic edit" style="width:16px;height:15px" viewBox="0 0 16 15"><path d="M9.700 1.550H3.950A2.400 2.400 0 0 0 1.550 3.950v5.750A2.400 2.400 0 0 0 3.950 12.100h6.550A2.400 2.400 0 0 0 12.900 9.700V5.700" fill="none" stroke="currentColor" stroke-width="2.250"/><path d="M5.500 9.200L6.100 7.200L11.200 2.700L12.700 4.300L7.600 8.800Z M13.900 -0.100L15.200 1.200L13.900 2.500L12.600 1.200Z"/></svg></a></td><td class="c2"><div class="tog off"><span class="knob"></span><span class="tx">Off</span></div></td><td class="c3"><a class="dag">example_external_task_marker_child</a><span class="label tag">example</span></td><td class="c4"><span class="label sch">None</span></td><td class="c5">airflow</td><td class="c6"><svg class="circs" width="300" height="36" viewBox="0 0 300 36"><circle cx="16.5" cy="18.500" r="12.500"/><circle cx="45.5" cy="18.500" r="12.500"/><circle cx="74.5" cy="18.500" r="12.500"/><circle cx="103.5" cy="18.500" r="12.500"/><circle cx="132.5" cy="18.500" r="12.500"/><circle cx="161.5" cy="18.500" r="12.500"/><circle cx="190.5" cy="18.500" r="12.500"/><circle cx="219.5" cy="18.500" r="12.500"/><circle cx="248.5" cy="18.500" r="12.500"/><circle cx="277.5" cy="18.500" r="12.500"/></svg></td><td class="c7"></td><td class="c8"><svg class="circs" width="100" height="36" viewBox="0 0 100 36"><circle cx="16.5" cy="18.500" r="12.500"/><circle cx="45.5" cy="18.500" r="12.500"/><circle cx="74.5" cy="18.500" r="12.500"/></svg></td><td class="c9"><div class="links"><a class="lk"><svg class="ic " style="left:4px;top:1px;width:16px;height:16px" viewBox="1343 220 16 16"><path d="M1343.900 222.100L1354.350 228.450L1343.900 234.800Z"/></svg></a><a class="lk"><svg class="ic " style="left:23px;top:1px;width:16px;height:16px" viewBox="1362 220 16 16"><circle cx="1368.600" cy="223.700" r="2.900"/><circle cx="1365.700" cy="225.900" r="2.800"/><circle cx="1371.500" cy="225.900" r="2.800"/><circle cx="1366.500" cy="228.300" r="2.400"/><circle cx="1370.700" cy="228.300" r="2.400"/><circle cx="1368.600" cy="226.500" r="3.600"/><path d="M1367.700 229.500H1369.850V233.500L1370.850 233.900V234.950H1366.750V233.900L1367.700 233.500Z"/></svg></a><a class="lk"><svg class="ic " style="left:42px;top:1px;width:16px;height:16px" viewBox="1381 220 16 16"><polygon points="1390.26,221.24 1390.90,223.76 1393.40,223.05 1392.69,225.55 1395.21,226.19 1393.35,228.00 1395.21,229.81 1392.69,230.45 1393.40,232.95 1390.90,232.24 1390.26,234.76 1388.45,232.90 1386.64,234.76 1386.00,232.24 1383.50,232.95 1384.21,230.45 1381.69,229.81 1383.55,228.00 1381.69,226.19 1384.21,225.55 1383.50,223.05 1386.00,223.76 1386.64,221.24 1388.45,223.10"/></svg></a><a class="lk"><svg class="ic " style="left:63px;top:1px;width:16px;height:16px" viewBox="1402 220 16 16"><path d="M1402.700 234.800v-4.600a1.100 1.100 0 0 1 1.100-1.100h1.300a1.100 1.100 0 0 1 1.100 1.100v4.600z M1407.300 234.800v-11.400a1.300 1.300 0 0 1 1.300-1.300h1.200a1.300 1.300 0 0 1 1.300 1.300v11.400z M1412 234.800v-8a1.100 1.100 0 0 1 1.100-1.100h1.600a1.100 1.100 0 0 1 1.100 1.100v8z"/></svg></a><a class="lk"><svg class="ic " style="left:81px;top:1px;width:16px;height:16px" viewBox="1420 220 16 16"><path d="M1421.100 223.100h4.700v4.900h3.300v6.800h-8z M1426.700 224.200l2.400 2.900h-2.400z M1427 220.800H1432.100V226H1435V232.700H1430.600V225.600L1427 221.100z M1433.300 222.200l1.700 2.300h-1.700z"/></svg></a><a class="lk"><svg class="ic " style="left:102px;top:1px;width:16px;height:16px" viewBox="1441 220 16 16"><rect x="1447" y="221.100" width="3.200" height="12.700" rx="1.600"/><path d="M1448.600 226.800L1442.700 231.400M1448.600 226.800L1454.500 231.400" fill="none" stroke="currentColor" stroke-width="2.100" stroke-linecap="round"/><path d="M1448.600 232.700L1446.300 234.400M1448.600 232.700L1450.900 234.400" fill="none" stroke="currentColor" stroke-width="1.600" stroke-linecap="round"/></svg></a><a class="lk"><svg class="ic " style="left:121px;top:1px;width:16px;height:16px" viewBox="1460 220 16 16"><rect x="1460.5" y="222.1" width="8.4" height="2.200" rx="0.35"/><rect x="1460.5" y="225.75" width="13.3" height="2.200" rx="0.35"/><rect x="1460.5" y="229.15" width="10.6" height="2.200" rx="0.35"/><rect x="1460.5" y="232.75" width="14.4" height="2.200" rx="0.35"/></svg></a><a class="lk"><svg class="ic " style="left:143px;top:1px;width:16px;height:16px" viewBox="1482 220 16 16"><path d="M1489.900 220.800L1482.800 228.500H1486.800L1485 235.100L1492.300 226.900H1488.300z"/></svg></a><a class="lk"><svg class="ic " style="left:161px;top:1px;width:16px;height:16px" viewBox="1500 220 16 16"><rect x="1500.4" y="222.1" width="14.2" height="2.200" rx="0.35"/><rect x="1500.4" y="225.75" width="14.2" height="2.200" rx="0.35"/><rect x="1500.4" y="229.15" width="14.2" height="2.200" rx="0.35"/><rect x="1500.4" y="232.75" width="14.2" height="2.200" rx="0.35"/></svg></a><a class="lk"><svg class="ic " style="left:181px;top:1px;width:16px;height:16px" viewBox="1520 220 16 16"><path d="M1521.500 227.900a5.700 5.700 0 0 1 10.300-3.300" fill="none" stroke="currentColor" stroke-width="1.900"/><path d="M1533.200 221v4.800h-4.800z"/><path d="M1532.900 228a5.700 5.700 0 0 1-10.300 3.300" fill="none" stroke="currentColor" stroke-width="1.900"/><path d="M1521.200 234.900v-4.800h4.800z"/></svg></a><a class="lk"><svg class="ic trash" style="left:201px;top:0px;width:16px;height:17px" viewBox="1540 219 16 17"><path d="M1544.700 222.400v-2h5v2" fill="none" stroke="currentColor" stroke-width="1"/><rect x="1541" y="222" width="12.900" height="1.100"/><path d="M1542.550 225.450h9.700v8a1 1 0 0 1-1 1h-7.700a1 1 0 0 1-1-1z" fill="none" stroke="currentColor" stroke-width="1.150"/><path d="M1544.800 225.500v9M1547.300 225.500v9M1549.700 225.500v9" fill="none" stroke="currentColor" stroke-width="1.200"/></svg></a></div></td></tr>
<tr><td class="c1"><a><svg class="ic edit" style="width:16px;height:15px" viewBox="0 0 16 15"><path d="M9.700 1.550H3.950A2.400 2.400 0 0 0 1.550 3.950v5.750A2.400 2.400 0 0 0 3.950 12.100h6.550A2.400 2.400 0 0 0 12.900 9.700V5.700" fill="none" stroke="currentColor" stroke-width="2.250"/><path d="M5.500 9.200L6.100 7.200L11.200 2.700L12.700 4.300L7.600 8.800Z M13.900 -0.100L15.200 1.200L13.900 2.500L12.600 1.200Z"/></svg></a></td><td class="c2"><div class="tog off"><span class="knob"></span><span class="tx">Off</span></div></td><td class="c3"><a class="dag">example_external_task_marker_parent</a><span class="label tag">example</span></td><td class="c4"><span class="label sch">None</span></td><td class="c5">airflow</td><td class="c6"><svg class="circs" width="300" height="36" viewBox="0 0 300 36"><circle cx="16.5" cy="18.500" r="12.500"/><circle cx="45.5" cy="18.500" r="12.500"/><circle cx="74.5" cy="18.500" r="12.500"/><circle cx="103.5" cy="18.500" r="12.500"/><circle cx="132.5" cy="18.500" r="12.500"/><circle cx="161.5" cy="18.500" r="12.500"/><circle cx="190.5" cy="18.500" r="12.500"/><circle cx="219.5" cy="18.500" r="12.500"/><circle cx="248.5" cy="18.500" r="12.500"/><circle cx="277.5" cy="18.500" r="12.500"/></svg></td><td class="c7"></td><td class="c8"><svg class="circs" width="100" height="36" viewBox="0 0 100 36"><circle cx="16.5" cy="18.500" r="12.500"/><circle cx="45.5" cy="18.500" r="12.500"/><circle cx="74.5" cy="18.500" r="12.500"/></svg></td><td class="c9"><div class="links"><a class="lk"><svg class="ic " style="left:4px;top:1px;width:16px;height:16px" viewBox="1343 220 16 16"><path d="M1343.900 222.100L1354.350 228.450L1343.900 234.800Z"/></svg></a><a class="lk"><svg class="ic " style="left:23px;top:1px;width:16px;height:16px" viewBox="1362 220 16 16"><circle cx="1368.600" cy="223.700" r="2.900"/><circle cx="1365.700" cy="225.900" r="2.800"/><circle cx="1371.500" cy="225.900" r="2.800"/><circle cx="1366.500" cy="228.300" r="2.400"/><circle cx="1370.700" cy="228.300" r="2.400"/><circle cx="1368.600" cy="226.500" r="3.600"/><path d="M1367.700 229.500H1369.850V233.500L1370.850 233.900V234.950H1366.750V233.900L1367.700 233.500Z"/></svg></a><a class="lk"><svg class="ic " style="left:42px;top:1px;width:16px;height:16px" viewBox="1381 220 16 16"><polygon points="1390.26,221.24 1390.90,223.76 1393.40,223.05 1392.69,225.55 1395.21,226.19 1393.35,228.00 1395.21,229.81 1392.69,230.45 1393.40,232.95 1390.90,232.24 1390.26,234.76 1388.45,232.90 1386.64,234.76 1386.00,232.24 1383.50,232.95 1384.21,230.45 1381.69,229.81 1383.55,228.00 1381.69,226.19 1384.21,225.55 1383.50,223.05 1386.00,223.76 1386.64,221.24 1388.45,223.10"/></svg></a><a class="lk"><svg class="ic " style="left:63px;top:1px;width:16px;height:16px" viewBox="1402 220 16 16"><path d="M1402.700 234.800v-4.600a1.100 1.100 0 0 1 1.100-1.100h1.300a1.100 1.100 0 0 1 1.100 1.100v4.600z M1407.300 234.800v-11.400a1.300 1.300 0 0 1 1.300-1.300h1.200a1.300 1.300 0 0 1 1.300 1.300v11.400z M1412 234.800v-8a1.100 1.100 0 0 1 1.100-1.100h1.600a1.100 1.100 0 0 1 1.100 1.100v8z"/></svg></a><a class="lk"><svg class="ic " style="left:81px;top:1px;width:16px;height:16px" viewBox="1420 220 16 16"><path d="M1421.100 223.100h4.700v4.900h3.300v6.800h-8z M1426.700 224.200l2.400 2.900h-2.400z M1427 220.800H1432.100V226H1435V232.700H1430.600V225.600L1427 221.100z M1433.300 222.200l1.700 2.300h-1.700z"/></svg></a><a class="lk"><svg class="ic " style="left:102px;top:1px;width:16px;height:16px" viewBox="1441 220 16 16"><rect x="1447" y="221.100" width="3.200" height="12.700" rx="1.600"/><path d="M1448.600 226.800L1442.700 231.400M1448.600 226.800L1454.500 231.400" fill="none" stroke="currentColor" stroke-width="2.100" stroke-linecap="round"/><path d="M1448.600 232.700L1446.300 234.400M1448.600 232.700L1450.900 234.400" fill="none" stroke="currentColor" stroke-width="1.600" stroke-linecap="round"/></svg></a><a class="lk"><svg class="ic " style="left:121px;top:1px;width:16px;height:16px" viewBox="1460 220 16 16"><rect x="1460.5" y="222.1" width="8.4" height="2.200" rx="0.35"/><rect x="1460.5" y="225.75" width="13.3" height="2.200" rx="0.35"/><rect x="1460.5" y="229.15" width="10.6" height="2.200" rx="0.35"/><rect x="1460.5" y="232.75" width="14.4" height="2.200" rx="0.35"/></svg></a><a class="lk"><svg class="ic " style="left:143px;top:1px;width:16px;height:16px" viewBox="1482 220 16 16"><path d="M1489.900 220.800L1482.800 228.500H1486.800L1485 235.100L1492.300 226.900H1488.300z"/></svg></a><a class="lk"><svg class="ic " style="left:161px;top:1px;width:16px;height:16px" viewBox="1500 220 16 16"><rect x="1500.4" y="222.1" width="14.2" height="2.200" rx="0.35"/><rect x="1500.4" y="225.75" width="14.2" height="2.200" rx="0.35"/><rect x="1500.4" y="229.15" width="14.2" height="2.200" rx="0.35"/><rect x="1500.4" y="232.75" width="14.2" height="2.200" rx="0.35"/></svg></a><a class="lk"><svg class="ic " style="left:181px;top:1px;width:16px;height:16px" viewBox="1520 220 16 16"><path d="M1521.500 227.900a5.700 5.700 0 0 1 10.300-3.300" fill="none" stroke="currentColor" stroke-width="1.900"/><path d="M1533.200 221v4.800h-4.800z"/><path d="M1532.900 228a5.700 5.700 0 0 1-10.300 3.300" fill="none" stroke="currentColor" stroke-width="1.900"/><path d="M1521.200 234.900v-4.800h4.800z"/></svg></a><a class="lk"><svg class="ic trash" style="left:201px;top:0px;width:16px;height:17px" viewBox="1540 219 16 17"><path d="M1544.700 222.400v-2h5v2" fill="none" stroke="currentColor" stroke-width="1"/><rect x="1541" y="222" width="12.900" height="1.100"/><path d="M1542.550 225.450h9.700v8a1 1 0 0 1-1 1h-7.700a1 1 0 0 1-1-1z" fill="none" stroke="currentColor" stroke-width="1.150"/><path d="M1544.800 225.500v9M1547.300 225.500v9M1549.700 225.500v9" fill="none" stroke="currentColor" stroke-width="1.200"/></svg></a></div></td></tr>
<tr><td class="c1"><a><svg class="ic edit" style="width:16px;height:15px" viewBox="0 0 16 15"><path d="M9.700 1.550H3.950A2.400 2.400 0 0 0 1.550 3.950v5.750A2.400 2.400 0 0 0 3.950 12.100h6.550A2.400 2.400 0 0 0 12.900 9.700V5.700" fill="none" stroke="currentColor" stroke-width="2.250"/><path d="M5.500 9.200L6.100 7.200L11.200 2.700L12.700 4.300L7.600 8.800Z M13.900 -0.100L15.200 1.200L13.900 2.500L12.600 1.200Z"/></svg></a></td><td class="c2"><div class="tog off"><span class="knob"></span><span class="tx">Off</span></div></td><td class="c3"><a class="dag">example_gcp_life_sciences</a><span class="label tag">example</span></td><td class="c4"><span class="label sch">None</span></td><td class="c5">airflow</td><td class="c6"><svg class="circs" width="300" height="36" viewBox="0 0 300 36"><circle cx="16.5" cy="18.500" r="12.500"/><circle cx="45.5" cy="18.500" r="12.500"/><circle cx="74.5" cy="18.500" r="12.500"/><circle cx="103.5" cy="18.500" r="12.500"/><circle cx="132.5" cy="18.500" r="12.500"/><circle cx="161.5" cy="18.500" r="12.500"/><circle cx="190.5" cy="18.500" r="12.500"/><circle cx="219.5" cy="18.500" r="12.500"/><circle cx="248.5" cy="18.500" r="12.500"/><circle cx="277.5" cy="18.500" r="12.500"/></svg></td><td class="c7"></td><td class="c8"><svg class="circs" width="100" height="36" viewBox="0 0 100 36"><circle cx="16.5" cy="18.500" r="12.500"/><circle cx="45.5" cy="18.500" r="12.500"/><circle cx="74.5" cy="18.500" r="12.500"/></svg></td><td class="c9"><div class="links"><a class="lk"><svg class="ic " style="left:4px;top:1px;width:16px;height:16px" viewBox="1343 220 16 16"><path d="M1343.900 222.100L1354.350 228.450L1343.900 234.800Z"/></svg></a><a class="lk"><svg class="ic " style="left:23px;top:1px;width:16px;height:16px" viewBox="1362 220 16 16"><circle cx="1368.600" cy="223.700" r="2.900"/><circle cx="1365.700" cy="225.900" r="2.800"/><circle cx="1371.500" cy="225.900" r="2.800"/><circle cx="1366.500" cy="228.300" r="2.400"/><circle cx="1370.700" cy="228.300" r="2.400"/><circle cx="1368.600" cy="226.500" r="3.600"/><path d="M1367.700 229.500H1369.850V233.500L1370.850 233.900V234.950H1366.750V233.900L1367.700 233.500Z"/></svg></a><a class="lk"><svg class="ic " style="left:42px;top:1px;width:16px;height:16px" viewBox="1381 220 16 16"><polygon points="1390.26,221.24 1390.90,223.76 1393.40,223.05 1392.69,225.55 1395.21,226.19 1393.35,228.00 1395.21,229.81 1392.69,230.45 1393.40,232.95 1390.90,232.24 1390.26,234.76 1388.45,232.90 1386.64,234.76 1386.00,232.24 1383.50,232.95 1384.21,230.45 1381.69,229.81 1383.55,228.00 1381.69,226.19 1384.21,225.55 1383.50,223.05 1386.00,223.76 1386.64,221.24 1388.45,223.10"/></svg></a><a class="lk"><svg class="ic " style="left:63px;top:1px;width:16px;height:16px" viewBox="1402 220 16 16"><path d="M1402.700 234.800v-4.600a1.100 1.100 0 0 1 1.100-1.100h1.300a1.100 1.100 0 0 1 1.100 1.100v4.600z M1407.300 234.800v-11.400a1.300 1.300 0 0 1 1.300-1.300h1.200a1.300 1.300 0 0 1 1.300 1.300v11.400z M1412 234.800v-8a1.100 1.100 0 0 1 1.100-1.100h1.600a1.100 1.100 0 0 1 1.100 1.100v8z"/></svg></a><a class="lk"><svg class="ic " style="left:81px;top:1px;width:16px;height:16px" viewBox="1420 220 16 16"><path d="M1421.100 223.100h4.700v4.900h3.300v6.800h-8z M1426.700 224.200l2.400 2.900h-2.400z M1427 220.800H1432.100V226H1435V232.700H1430.600V225.600L1427 221.100z M1433.300 222.200l1.700 2.300h-1.700z"/></svg></a><a class="lk"><svg class="ic " style="left:102px;top:1px;width:16px;height:16px" viewBox="1441 220 16 16"><rect x="1447" y="221.100" width="3.200" height="12.700" rx="1.600"/><path d="M1448.600 226.800L1442.700 231.400M1448.600 226.800L1454.500 231.400" fill="none" stroke="currentColor" stroke-width="2.100" stroke-linecap="round"/><path d="M1448.600 232.700L1446.300 234.400M1448.600 232.700L1450.900 234.400" fill="none" stroke="currentColor" stroke-width="1.600" stroke-linecap="round"/></svg></a><a class="lk"><svg class="ic " style="left:121px;top:1px;width:16px;height:16px" viewBox="1460 220 16 16"><rect x="1460.5" y="222.1" width="8.4" height="2.200" rx="0.35"/><rect x="1460.5" y="225.75" width="13.3" height="2.200" rx="0.35"/><rect x="1460.5" y="229.15" width="10.6" height="2.200" rx="0.35"/><rect x="1460.5" y="232.75" width="14.4" height="2.200" rx="0.35"/></svg></a><a class="lk"><svg class="ic " style="left:143px;top:1px;width:16px;height:16px" viewBox="1482 220 16 16"><path d="M1489.900 220.800L1482.800 228.500H1486.800L1485 235.100L1492.300 226.900H1488.300z"/></svg></a><a class="lk"><svg class="ic " style="left:161px;top:1px;width:16px;height:16px" viewBox="1500 220 16 16"><rect x="1500.4" y="222.1" width="14.2" height="2.200" rx="0.35"/><rect x="1500.4" y="225.75" width="14.2" height="2.200" rx="0.35"/><rect x="1500.4" y="229.15" width="14.2" height="2.200" rx="0.35"/><rect x="1500.4" y="232.75" width="14.2" height="2.200" rx="0.35"/></svg></a><a class="lk"><svg class="ic " style="left:181px;top:1px;width:16px;height:16px" viewBox="1520 220 16 16"><path d="M1521.500 227.900a5.700 5.700 0 0 1 10.300-3.300" fill="none" stroke="currentColor" stroke-width="1.900"/><path d="M1533.200 221v4.800h-4.800z"/><path d="M1532.900 228a5.700 5.700 0 0 1-10.300 3.300" fill="none" stroke="currentColor" stroke-width="1.900"/><path d="M1521.200 234.900v-4.800h4.800z"/></svg></a><a class="lk"><svg class="ic trash" style="left:201px;top:0px;width:16px;height:17px" viewBox="1540 219 16 17"><path d="M1544.700 222.400v-2h5v2" fill="none" stroke="currentColor" stroke-width="1"/><rect x="1541" y="222" width="12.900" height="1.100"/><path d="M1542.550 225.450h9.700v8a1 1 0 0 1-1 1h-7.700a1 1 0 0 1-1-1z" fill="none" stroke="currentColor" stroke-width="1.150"/><path d="M1544.800 225.500v9M1547.300 225.500v9M1549.700 225.500v9" fill="none" stroke="currentColor" stroke-width="1.200"/></svg></a></div></td></tr>
<tr class="hov"><td class="c1"><a><svg class="ic edit" style="width:16px;height:15px" viewBox="0 0 16 15"><path d="M9.700 1.550H3.950A2.400 2.400 0 0 0 1.550 3.950v5.750A2.400 2.400 0 0 0 3.950 12.100h6.550A2.400 2.400 0 0 0 12.900 9.700V5.700" fill="none" stroke="currentColor" stroke-width="2.250"/><path d="M5.500 9.200L6.100 7.200L11.200 2.700L12.700 4.300L7.600 8.800Z M13.900 -0.100L15.200 1.200L13.900 2.500L12.600 1.200Z"/></svg></a></td><td class="c2"><div class="tog on"><span class="knob"></span><span class="tx">On</span></div></td><td class="c3"><a class="dag">example_kubernetes_executor</a><span class="label tag">example</span></td><td class="c4"><span class="label sch">None</span></td><td class="c5">airflow</td><td class="c6"><svg class="circs" width="300" height="36" viewBox="0 0 300 36"><circle cx="16.5" cy="18.500" r="12.500"/><circle cx="45.5" cy="18.500" r="12.500"/><circle cx="74.5" cy="18.500" r="12.500"/><circle cx="103.5" cy="18.500" r="12.500"/><circle cx="132.5" cy="18.500" r="12.500"/><circle cx="161.5" cy="18.500" r="12.500"/><circle cx="190.5" cy="18.500" r="12.500"/><circle cx="219.5" cy="18.500" r="12.500"/><circle cx="248.5" cy="18.500" r="12.500"/><circle cx="277.5" cy="18.500" r="12.500"/></svg></td><td class="c7"></td><td class="c8"><svg class="circs" width="100" height="36" viewBox="0 0 100 36"><circle cx="16.5" cy="18.500" r="12.500"/><circle cx="45.5" cy="18.500" r="12.500"/><circle cx="74.5" cy="18.500" r="12.500"/></svg></td><td class="c9"><div class="links"><a class="lk"><svg class="ic " style="left:4px;top:1px;width:16px;height:16px" viewBox="1343 220 16 16"><path d="M1343.900 222.100L1354.350 228.450L1343.900 234.800Z"/></svg></a><a class="lk"><svg class="ic " style="left:23px;top:1px;width:16px;height:16px" viewBox="1362 220 16 16"><circle cx="1368.600" cy="223.700" r="2.900"/><circle cx="1365.700" cy="225.900" r="2.800"/><circle cx="1371.500" cy="225.900" r="2.800"/><circle cx="1366.500" cy="228.300" r="2.400"/><circle cx="1370.700" cy="228.300" r="2.400"/><circle cx="1368.600" cy="226.500" r="3.600"/><path d="M1367.700 229.500H1369.850V233.500L1370.850 233.900V234.950H1366.750V233.900L1367.700 233.500Z"/></svg></a><a class="lk"><svg class="ic " style="left:42px;top:1px;width:16px;height:16px" viewBox="1381 220 16 16"><polygon points="1390.26,221.24 1390.90,223.76 1393.40,223.05 1392.69,225.55 1395.21,226.19 1393.35,228.00 1395.21,229.81 1392.69,230.45 1393.40,232.95 1390.90,232.24 1390.26,234.76 1388.45,232.90 1386.64,234.76 1386.00,232.24 1383.50,232.95 1384.21,230.45 1381.69,229.81 1383.55,228.00 1381.69,226.19 1384.21,225.55 1383.50,223.05 1386.00,223.76 1386.64,221.24 1388.45,223.10"/></svg></a><a class="lk"><svg class="ic " style="left:63px;top:1px;width:16px;height:16px" viewBox="1402 220 16 16"><path d="M1402.700 234.800v-4.600a1.100 1.100 0 0 1 1.100-1.100h1.300a1.100 1.100 0 0 1 1.100 1.100v4.600z M1407.300 234.800v-11.400a1.300 1.300 0 0 1 1.300-1.300h1.200a1.300 1.300 0 0 1 1.300 1.300v11.400z M1412 234.800v-8a1.100 1.100 0 0 1 1.100-1.100h1.600a1.100 1.100 0 0 1 1.100 1.100v8z"/></svg></a><a class="lk"><svg class="ic " style="left:81px;top:1px;width:16px;height:16px" viewBox="1420 220 16 16"><path d="M1421.100 223.100h4.700v4.900h3.300v6.800h-8z M1426.700 224.200l2.400 2.900h-2.400z M1427 220.800H1432.100V226H1435V232.700H1430.600V225.600L1427 221.100z M1433.300 222.200l1.700 2.300h-1.700z"/></svg></a><a class="lk"><svg class="ic " style="left:102px;top:1px;width:16px;height:16px" viewBox="1441 220 16 16"><rect x="1447" y="221.100" width="3.200" height="12.700" rx="1.600"/><path d="M1448.600 226.800L1442.700 231.400M1448.600 226.800L1454.500 231.400" fill="none" stroke="currentColor" stroke-width="2.100" stroke-linecap="round"/><path d="M1448.600 232.700L1446.300 234.400M1448.600 232.700L1450.900 234.400" fill="none" stroke="currentColor" stroke-width="1.600" stroke-linecap="round"/></svg></a><a class="lk"><svg class="ic " style="left:121px;top:1px;width:16px;height:16px" viewBox="1460 220 16 16"><rect x="1460.5" y="222.1" width="8.4" height="2.200" rx="0.35"/><rect x="1460.5" y="225.75" width="13.3" height="2.200" rx="0.35"/><rect x="1460.5" y="229.15" width="10.6" height="2.200" rx="0.35"/><rect x="1460.5" y="232.75" width="14.4" height="2.200" rx="0.35"/></svg></a><a class="lk"><svg class="ic " style="left:143px;top:1px;width:16px;height:16px" viewBox="1482 220 16 16"><path d="M1489.900 220.800L1482.800 228.500H1486.800L1485 235.100L1492.300 226.900H1488.300z"/></svg></a><a class="lk"><svg class="ic " style="left:161px;top:1px;width:16px;height:16px" viewBox="1500 220 16 16"><rect x="1500.4" y="222.1" width="14.2" height="2.200" rx="0.35"/><rect x="1500.4" y="225.75" width="14.2" height="2.200" rx="0.35"/><rect x="1500.4" y="229.15" width="14.2" height="2.200" rx="0.35"/><rect x="1500.4" y="232.75" width="14.2" height="2.200" rx="0.35"/></svg></a><a class="lk"><svg class="ic " style="left:181px;top:1px;width:16px;height:16px" viewBox="1520 220 16 16"><path d="M1521.500 227.900a5.700 5.700 0 0 1 10.300-3.300" fill="none" stroke="currentColor" stroke-width="1.900"/><path d="M1533.200 221v4.800h-4.800z"/><path d="M1532.900 228a5.700 5.700 0 0 1-10.300 3.300" fill="none" stroke="currentColor" stroke-width="1.900"/><path d="M1521.200 234.900v-4.800h4.800z"/></svg></a><a class="lk"><svg class="ic trash" style="left:201px;top:0px;width:16px;height:17px" viewBox="1540 219 16 17"><path d="M1544.700 222.400v-2h5v2" fill="none" stroke="currentColor" stroke-width="1"/><rect x="1541" y="222" width="12.900" height="1.100"/><path d="M1542.550 225.450h9.700v8a1 1 0 0 1-1 1h-7.700a1 1 0 0 1-1-1z" fill="none" stroke="currentColor" stroke-width="1.150"/><path d="M1544.800 225.500v9M1547.300 225.500v9M1549.700 225.500v9" fill="none" stroke="currentColor" stroke-width="1.200"/></svg></a></div></td></tr>
<tr><td class="c1"><a><svg class="ic edit" style="width:16px;height:15px" viewBox="0 0 16 15"><path d="M9.700 1.550H3.950A2.400 2.400 0 0 0 1.550 3.950v5.750A2.400 2.400 0 0 0 3.950 12.100h6.550A2.400 2.400 0 0 0 12.900 9.700V5.700" fill="none" stroke="currentColor" stroke-width="2.250"/><path d="M5.500 9.200L6.100 7.200L11.200 2.700L12.700 4.300L7.600 8.800Z M13.900 -0.100L15.200 1.200L13.900 2.500L12.600 1.200Z"/></svg></a></td><td class="c2"><div class="tog off"><span class="knob"></span><span class="tx">Off</span></div></td><td class="c3"><a class="dag">example_kubernetes_executor_config</a><span class="label tag">example</span></td><td class="c4"><span class="label sch">None</span></td><td class="c5">airflow</td><td class="c6"><svg class="circs" width="300" height="36" viewBox="0 0 300 36"><circle cx="16.5" cy="18.500" r="12.500"/><circle cx="45.5" cy="18.500" r="12.500"/><circle cx="74.5" cy="18.500" r="12.500"/><circle cx="103.5" cy="18.500" r="12.500"/><circle cx="132.5" cy="18.500" r="12.500"/><circle cx="161.5" cy="18.500" r="12.500"/><circle cx="190.5" cy="18.500" r="12.500"/><circle cx="219.5" cy="18.500" r="12.500"/><circle cx="248.5" cy="18.500" r="12.500"/><circle cx="277.5" cy="18.500" r="12.500"/></svg></td><td class="c7"></td><td class="c8"><svg class="circs" width="100" height="36" viewBox="0 0 100 36"><circle cx="16.5" cy="18.500" r="12.500"/><circle cx="45.5" cy="18.500" r="12.500"/><circle cx="74.5" cy="18.500" r="12.500"/></svg></td><td class="c9"><div class="links"><a class="lk"><svg class="ic " style="left:4px;top:1px;width:16px;height:16px" viewBox="1343 220 16 16"><path d="M1343.900 222.100L1354.350 228.450L1343.900 234.800Z"/></svg></a><a class="lk"><svg class="ic " style="left:23px;top:1px;width:16px;height:16px" viewBox="1362 220 16 16"><circle cx="1368.600" cy="223.700" r="2.900"/><circle cx="1365.700" cy="225.900" r="2.800"/><circle cx="1371.500" cy="225.900" r="2.800"/><circle cx="1366.500" cy="228.300" r="2.400"/><circle cx="1370.700" cy="228.300" r="2.400"/><circle cx="1368.600" cy="226.500" r="3.600"/><path d="M1367.700 229.500H1369.850V233.500L1370.850 233.900V234.950H1366.750V233.900L1367.700 233.500Z"/></svg></a><a class="lk"><svg class="ic " style="left:42px;top:1px;width:16px;height:16px" viewBox="1381 220 16 16"><polygon points="1390.26,221.24 1390.90,223.76 1393.40,223.05 1392.69,225.55 1395.21,226.19 1393.35,228.00 1395.21,229.81 1392.69,230.45 1393.40,232.95 1390.90,232.24 1390.26,234.76 1388.45,232.90 1386.64,234.76 1386.00,232.24 1383.50,232.95 1384.21,230.45 1381.69,229.81 1383.55,228.00 1381.69,226.19 1384.21,225.55 1383.50,223.05 1386.00,223.76 1386.64,221.24 1388.45,223.10"/></svg></a><a class="lk"><svg class="ic " style="left:63px;top:1px;width:16px;height:16px" viewBox="1402 220 16 16"><path d="M1402.700 234.800v-4.600a1.100 1.100 0 0 1 1.100-1.100h1.300a1.100 1.100 0 0 1 1.100 1.100v4.600z M1407.300 234.800v-11.400a1.300 1.300 0 0 1 1.300-1.300h1.200a1.300 1.300 0 0 1 1.300 1.300v11.400z M1412 234.800v-8a1.100 1.100 0 0 1 1.100-1.100h1.600a1.100 1.100 0 0 1 1.100 1.100v8z"/></svg></a><a class="lk"><svg class="ic " style="left:81px;top:1px;width:16px;height:16px" viewBox="1420 220 16 16"><path d="M1421.100 223.100h4.700v4.900h3.300v6.800h-8z M1426.700 224.200l2.400 2.900h-2.400z M1427 220.800H1432.100V226H1435V232.700H1430.600V225.600L1427 221.100z M1433.300 222.200l1.700 2.300h-1.700z"/></svg></a><a class="lk"><svg class="ic " style="left:102px;top:1px;width:16px;height:16px" viewBox="1441 220 16 16"><rect x="1447" y="221.100" width="3.200" height="12.700" rx="1.600"/><path d="M1448.600 226.800L1442.700 231.400M1448.600 226.800L1454.500 231.400" fill="none" stroke="currentColor" stroke-width="2.100" stroke-linecap="round"/><path d="M1448.600 232.700L1446.300 234.400M1448.600 232.700L1450.900 234.400" fill="none" stroke="currentColor" stroke-width="1.600" stroke-linecap="round"/></svg></a><a class="lk"><svg class="ic " style="left:121px;top:1px;width:16px;height:16px" viewBox="1460 220 16 16"><rect x="1460.5" y="222.1" width="8.4" height="2.200" rx="0.35"/><rect x="1460.5" y="225.75" width="13.3" height="2.200" rx="0.35"/><rect x="1460.5" y="229.15" width="10.6" height="2.200" rx="0.35"/><rect x="1460.5" y="232.75" width="14.4" height="2.200" rx="0.35"/></svg></a><a class="lk"><svg class="ic " style="left:143px;top:1px;width:16px;height:16px" viewBox="1482 220 16 16"><path d="M1489.900 220.800L1482.800 228.500H1486.800L1485 235.100L1492.300 226.900H1488.300z"/></svg></a><a class="lk"><svg class="ic " style="left:161px;top:1px;width:16px;height:16px" viewBox="1500 220 16 16"><rect x="1500.4" y="222.1" width="14.2" height="2.200" rx="0.35"/><rect x="1500.4" y="225.75" width="14.2" height="2.200" rx="0.35"/><rect x="1500.4" y="229.15" width="14.2" height="2.200" rx="0.35"/><rect x="1500.4" y="232.75" width="14.2" height="2.200" rx="0.35"/></svg></a><a class="lk"><svg class="ic " style="left:181px;top:1px;width:16px;height:16px" viewBox="1520 220 16 16"><path d="M1521.500 227.900a5.700 5.700 0 0 1 10.300-3.300" fill="none" stroke="currentColor" stroke-width="1.900"/><path d="M1533.200 221v4.800h-4.800z"/><path d="M1532.900 228a5.700 5.700 0 0 1-10.300 3.300" fill="none" stroke="currentColor" stroke-width="1.900"/><path d="M1521.200 234.900v-4.800h4.800z"/></svg></a><a class="lk"><svg class="ic trash" style="left:201px;top:0px;width:16px;height:17px" viewBox="1540 219 16 17"><path d="M1544.700 222.400v-2h5v2" fill="none" stroke="currentColor" stroke-width="1"/><rect x="1541" y="222" width="12.900" height="1.100"/><path d="M1542.550 225.450h9.700v8a1 1 0 0 1-1 1h-7.700a1 1 0 0 1-1-1z" fill="none" stroke="currentColor" stroke-width="1.150"/><path d="M1544.800 225.500v9M1547.300 225.500v9M1549.700 225.500v9" fill="none" stroke="currentColor" stroke-width="1.200"/></svg></a></div></td></tr>
<tr><td class="c1"><a><svg class="ic edit" style="width:16px;height:15px" viewBox="0 0 16 15"><path d="M9.700 1.550H3.950A2.400 2.400 0 0 0 1.550 3.950v5.750A2.400 2.400 0 0 0 3.950 12.100h6.550A2.400 2.400 0 0 0 12.900 9.700V5.700" fill="none" stroke="currentColor" stroke-width="2.250"/><path d="M5.500 9.200L6.100 7.200L11.200 2.700L12.700 4.300L7.600 8.800Z M13.900 -0.100L15.200 1.200L13.900 2.500L12.600 1.200Z"/></svg></a></td><td class="c2"><div class="tog off"><span class="knob"></span><span class="tx">Off</span></div></td><td class="c3"><a class="dag">example_nested_branch_dag</a></td><td class="c4"><span class="label sch">@daily</span></td><td class="c5">airflow</td><td class="c6"><svg class="circs" width="300" height="36" viewBox="0 0 300 36"><circle cx="16.5" cy="18.500" r="12.500"/><circle cx="45.5" cy="18.500" r="12.500"/><circle cx="74.5" cy="18.500" r="12.500"/><circle cx="103.5" cy="18.500" r="12.500"/><circle cx="132.5" cy="18.500" r="12.500"/><circle cx="161.5" cy="18.500" r="12.500"/><circle cx="190.5" cy="18.500" r="12.500"/><circle cx="219.5" cy="18.500" r="12.500"/><circle cx="248.5" cy="18.500" r="12.500"/><circle cx="277.5" cy="18.500" r="12.500"/></svg></td><td class="c7"></td><td class="c8"><svg class="circs" width="100" height="36" viewBox="0 0 100 36"><circle cx="16.5" cy="18.500" r="12.500"/><circle cx="45.5" cy="18.500" r="12.500"/><circle cx="74.5" cy="18.500" r="12.500"/></svg></td><td class="c9"><div class="links"><a class="lk"><svg class="ic " style="left:4px;top:1px;width:16px;height:16px" viewBox="1343 220 16 16"><path d="M1343.900 222.100L1354.350 228.450L1343.900 234.800Z"/></svg></a><a class="lk"><svg class="ic " style="left:23px;top:1px;width:16px;height:16px" viewBox="1362 220 16 16"><circle cx="1368.600" cy="223.700" r="2.900"/><circle cx="1365.700" cy="225.900" r="2.800"/><circle cx="1371.500" cy="225.900" r="2.800"/><circle cx="1366.500" cy="228.300" r="2.400"/><circle cx="1370.700" cy="228.300" r="2.400"/><circle cx="1368.600" cy="226.500" r="3.600"/><path d="M1367.700 229.500H1369.850V233.500L1370.850 233.900V234.950H1366.750V233.900L1367.700 233.500Z"/></svg></a><a class="lk"><svg class="ic " style="left:42px;top:1px;width:16px;height:16px" viewBox="1381 220 16 16"><polygon points="1390.26,221.24 1390.90,223.76 1393.40,223.05 1392.69,225.55 1395.21,226.19 1393.35,228.00 1395.21,229.81 1392.69,230.45 1393.40,232.95 1390.90,232.24 1390.26,234.76 1388.45,232.90 1386.64,234.76 1386.00,232.24 1383.50,232.95 1384.21,230.45 1381.69,229.81 1383.55,228.00 1381.69,226.19 1384.21,225.55 1383.50,223.05 1386.00,223.76 1386.64,221.24 1388.45,223.10"/></svg></a><a class="lk"><svg class="ic " style="left:63px;top:1px;width:16px;height:16px" viewBox="1402 220 16 16"><path d="M1402.700 234.800v-4.600a1.100 1.100 0 0 1 1.100-1.100h1.300a1.100 1.100 0 0 1 1.100 1.100v4.600z M1407.300 234.800v-11.400a1.300 1.300 0 0 1 1.300-1.300h1.200a1.300 1.300 0 0 1 1.300 1.300v11.400z M1412 234.800v-8a1.100 1.100 0 0 1 1.100-1.100h1.600a1.100 1.100 0 0 1 1.100 1.100v8z"/></svg></a><a class="lk"><svg class="ic " style="left:81px;top:1px;width:16px;height:16px" viewBox="1420 220 16 16"><path d="M1421.100 223.100h4.700v4.900h3.300v6.800h-8z M1426.700 224.200l2.400 2.900h-2.400z M1427 220.800H1432.100V226H1435V232.700H1430.600V225.600L1427 221.100z M1433.300 222.200l1.700 2.300h-1.700z"/></svg></a><a class="lk"><svg class="ic " style="left:102px;top:1px;width:16px;height:16px" viewBox="1441 220 16 16"><rect x="1447" y="221.100" width="3.200" height="12.700" rx="1.600"/><path d="M1448.600 226.800L1442.700 231.400M1448.600 226.800L1454.500 231.400" fill="none" stroke="currentColor" stroke-width="2.100" stroke-linecap="round"/><path d="M1448.600 232.700L1446.300 234.400M1448.600 232.700L1450.900 234.400" fill="none" stroke="currentColor" stroke-width="1.600" stroke-linecap="round"/></svg></a><a class="lk"><svg class="ic " style="left:121px;top:1px;width:16px;height:16px" viewBox="1460 220 16 16"><rect x="1460.5" y="222.1" width="8.4" height="2.200" rx="0.35"/><rect x="1460.5" y="225.75" width="13.3" height="2.200" rx="0.35"/><rect x="1460.5" y="229.15" width="10.6" height="2.200" rx="0.35"/><rect x="1460.5" y="232.75" width="14.4" height="2.200" rx="0.35"/></svg></a><a class="lk"><svg class="ic " style="left:143px;top:1px;width:16px;height:16px" viewBox="1482 220 16 16"><path d="M1489.900 220.800L1482.800 228.500H1486.800L1485 235.100L1492.300 226.900H1488.300z"/></svg></a><a class="lk"><svg class="ic " style="left:161px;top:1px;width:16px;height:16px" viewBox="1500 220 16 16"><rect x="1500.4" y="222.1" width="14.2" height="2.200" rx="0.35"/><rect x="1500.4" y="225.75" width="14.2" height="2.200" rx="0.35"/><rect x="1500.4" y="229.15" width="14.2" height="2.200" rx="0.35"/><rect x="1500.4" y="232.75" width="14.2" height="2.200" rx="0.35"/></svg></a><a class="lk"><svg class="ic " style="left:181px;top:1px;width:16px;height:16px" viewBox="1520 220 16 16"><path d="M1521.500 227.900a5.700 5.700 0 0 1 10.300-3.300" fill="none" stroke="currentColor" stroke-width="1.900"/><path d="M1533.200 221v4.800h-4.800z"/><path d="M1532.900 228a5.700 5.700 0 0 1-10.300 3.300" fill="none" stroke="currentColor" stroke-width="1.900"/><path d="M1521.200 234.900v-4.800h4.800z"/></svg></a><a class="lk"><svg class="ic trash" style="left:201px;top:0px;width:16px;height:17px" viewBox="1540 219 16 17"><path d="M1544.700 222.400v-2h5v2" fill="none" stroke="currentColor" stroke-width="1"/><rect x="1541" y="222" width="12.900" height="1.100"/><path d="M1542.550 225.450h9.700v8a1 1 0 0 1-1 1h-7.700a1 1 0 0 1-1-1z" fill="none" stroke="currentColor" stroke-width="1.150"/><path d="M1544.800 225.500v9M1547.300 225.500v9M1549.700 225.500v9" fill="none" stroke="currentColor" stroke-width="1.200"/></svg></a></div></td></tr>
<tr><td class="c1"><a><svg class="ic edit" style="width:16px;height:15px" viewBox="0 0 16 15"><path d="M9.700 1.550H3.950A2.400 2.400 0 0 0 1.550 3.950v5.750A2.400 2.400 0 0 0 3.950 12.100h6.550A2.400 2.400 0 0 0 12.900 9.700V5.700" fill="none" stroke="currentColor" stroke-width="2.250"/><path d="M5.500 9.200L6.100 7.200L11.200 2.700L12.700 4.300L7.600 8.800Z M13.900 -0.100L15.200 1.200L13.900 2.500L12.600 1.200Z"/></svg></a></td><td class="c2"><div class="tog off"><span class="knob"></span><span class="tx">Off</span></div></td><td class="c3"><a class="dag">example_passing_params_via_test_command</a><span class="label tag">example</span></td><td class="c4"><span class="label sch">*/1 * * * *</span></td><td class="c5">airflow</td><td class="c6"><svg class="circs" width="300" height="36" viewBox="0 0 300 36"><circle cx="16.5" cy="18.500" r="12.500"/><circle cx="45.5" cy="18.500" r="12.500"/><circle cx="74.5" cy="18.500" r="12.500"/><circle cx="103.5" cy="18.500" r="12.500"/><circle cx="132.5" cy="18.500" r="12.500"/><circle cx="161.5" cy="18.500" r="12.500"/><circle cx="190.5" cy="18.500" r="12.500"/><circle cx="219.5" cy="18.500" r="12.500"/><circle cx="248.5" cy="18.500" r="12.500"/><circle cx="277.5" cy="18.500" r="12.500"/></svg></td><td class="c7"></td><td class="c8"><svg class="circs" width="100" height="36" viewBox="0 0 100 36"><circle cx="16.5" cy="18.500" r="12.500"/><circle cx="45.5" cy="18.500" r="12.500"/><circle cx="74.5" cy="18.500" r="12.500"/></svg></td><td class="c9"><div class="links"><a class="lk"><svg class="ic " style="left:4px;top:1px;width:16px;height:16px" viewBox="1343 220 16 16"><path d="M1343.900 222.100L1354.350 228.450L1343.900 234.800Z"/></svg></a><a class="lk"><svg class="ic " style="left:23px;top:1px;width:16px;height:16px" viewBox="1362 220 16 16"><circle cx="1368.600" cy="223.700" r="2.900"/><circle cx="1365.700" cy="225.900" r="2.800"/><circle cx="1371.500" cy="225.900" r="2.800"/><circle cx="1366.500" cy="228.300" r="2.400"/><circle cx="1370.700" cy="228.300" r="2.400"/><circle cx="1368.600" cy="226.500" r="3.600"/><path d="M1367.700 229.500H1369.850V233.500L1370.850 233.900V234.950H1366.750V233.900L1367.700 233.500Z"/></svg></a><a class="lk"><svg class="ic " style="left:42px;top:1px;width:16px;height:16px" viewBox="1381 220 16 16"><polygon points="1390.26,221.24 1390.90,223.76 1393.40,223.05 1392.69,225.55 1395.21,226.19 1393.35,228.00 1395.21,229.81 1392.69,230.45 1393.40,232.95 1390.90,232.24 1390.26,234.76 1388.45,232.90 1386.64,234.76 1386.00,232.24 1383.50,232.95 1384.21,230.45 1381.69,229.81 1383.55,228.00 1381.69,226.19 1384.21,225.55 1383.50,223.05 1386.00,223.76 1386.64,221.24 1388.45,223.10"/></svg></a><a class="lk"><svg class="ic " style="left:63px;top:1px;width:16px;height:16px" viewBox="1402 220 16 16"><path d="M1402.700 234.800v-4.600a1.100 1.100 0 0 1 1.100-1.100h1.300a1.100 1.100 0 0 1 1.100 1.100v4.600z M1407.300 234.800v-11.400a1.300 1.300 0 0 1 1.300-1.300h1.200a1.300 1.300 0 0 1 1.300 1.300v11.400z M1412 234.800v-8a1.100 1.100 0 0 1 1.100-1.100h1.600a1.100 1.100 0 0 1 1.100 1.100v8z"/></svg></a><a class="lk"><svg class="ic " style="left:81px;top:1px;width:16px;height:16px" viewBox="1420 220 16 16"><path d="M1421.100 223.100h4.700v4.900h3.300v6.800h-8z M1426.700 224.200l2.400 2.900h-2.400z M1427 220.800H1432.100V226H1435V232.700H1430.600V225.600L1427 221.100z M1433.300 222.200l1.700 2.300h-1.700z"/></svg></a><a class="lk"><svg class="ic " style="left:102px;top:1px;width:16px;height:16px" viewBox="1441 220 16 16"><rect x="1447" y="221.100" width="3.200" height="12.700" rx="1.600"/><path d="M1448.600 226.800L1442.700 231.400M1448.600 226.800L1454.500 231.400" fill="none" stroke="currentColor" stroke-width="2.100" stroke-linecap="round"/><path d="M1448.600 232.700L1446.300 234.400M1448.600 232.700L1450.900 234.400" fill="none" stroke="currentColor" stroke-width="1.600" stroke-linecap="round"/></svg></a><a class="lk"><svg class="ic " style="left:121px;top:1px;width:16px;height:16px" viewBox="1460 220 16 16"><rect x="1460.5" y="222.1" width="8.4" height="2.200" rx="0.35"/><rect x="1460.5" y="225.75" width="13.3" height="2.200" rx="0.35"/><rect x="1460.5" y="229.15" width="10.6" height="2.200" rx="0.35"/><rect x="1460.5" y="232.75" width="14.4" height="2.200" rx="0.35"/></svg></a><a class="lk"><svg class="ic " style="left:143px;top:1px;width:16px;height:16px" viewBox="1482 220 16 16"><path d="M1489.900 220.800L1482.800 228.500H1486.800L1485 235.100L1492.300 226.900H1488.300z"/></svg></a><a class="lk"><svg class="ic " style="left:161px;top:1px;width:16px;height:16px" viewBox="1500 220 16 16"><rect x="1500.4" y="222.1" width="14.2" height="2.200" rx="0.35"/><rect x="1500.4" y="225.75" width="14.2" height="2.200" rx="0.35"/><rect x="1500.4" y="229.15" width="14.2" height="2.200" rx="0.35"/><rect x="1500.4" y="232.75" width="14.2" height="2.200" rx="0.35"/></svg></a><a class="lk"><svg class="ic " style="left:181px;top:1px;width:16px;height:16px" viewBox="1520 220 16 16"><path d="M1521.500 227.900a5.700 5.700 0 0 1 10.300-3.300" fill="none" stroke="currentColor" stroke-width="1.900"/><path d="M1533.200 221v4.800h-4.800z"/><path d="M1532.900 228a5.700 5.700 0 0 1-10.300 3.300" fill="none" stroke="currentColor" stroke-width="1.900"/><path d="M1521.200 234.900v-4.800h4.800z"/></svg></a><a class="lk"><svg class="ic trash" style="left:201px;top:0px;width:16px;height:17px" viewBox="1540 219 16 17"><path d="M1544.700 222.400v-2h5v2" fill="none" stroke="currentColor" stroke-width="1"/><rect x="1541" y="222" width="12.900" height="1.100"/><path d="M1542.550 225.450h9.700v8a1 1 0 0 1-1 1h-7.700a1 1 0 0 1-1-1z" fill="none" stroke="currentColor" stroke-width="1.150"/><path d="M1544.800 225.500v9M1547.300 225.500v9M1549.700 225.500v9" fill="none" stroke="currentColor" stroke-width="1.200"/></svg></a></div></td></tr>
<tr><td class="c1"><a><svg class="ic edit" style="width:16px;height:15px" viewBox="0 0 16 15"><path d="M9.700 1.550H3.950A2.400 2.400 0 0 0 1.550 3.950v5.750A2.400 2.400 0 0 0 3.950 12.100h6.550A2.400 2.400 0 0 0 12.900 9.700V5.700" fill="none" stroke="currentColor" stroke-width="2.250"/><path d="M5.500 9.200L6.100 7.200L11.200 2.700L12.700 4.300L7.600 8.800Z M13.900 -0.100L15.200 1.200L13.900 2.500L12.600 1.200Z"/></svg></a></td><td class="c2"><div class="tog off"><span class="knob"></span><span class="tx">Off</span></div></td><td class="c3"><a class="dag">example_python_operator</a><span class="label tag">example</span></td><td class="c4"><span class="label sch">None</span></td><td class="c5">airflow</td><td class="c6"><svg class="circs" width="300" height="36" viewBox="0 0 300 36"><circle cx="16.5" cy="18.500" r="12.500"/><circle cx="45.5" cy="18.500" r="12.500"/><circle cx="74.5" cy="18.500" r="12.500"/><circle cx="103.5" cy="18.500" r="12.500"/><circle cx="132.5" cy="18.500" r="12.500"/><circle cx="161.5" cy="18.500" r="12.500"/><circle cx="190.5" cy="18.500" r="12.500"/><circle cx="219.5" cy="18.500" r="12.500"/><circle cx="248.5" cy="18.500" r="12.500"/><circle cx="277.5" cy="18.500" r="12.500"/></svg></td><td class="c7"></td><td class="c8"><svg class="circs" width="100" height="36" viewBox="0 0 100 36"><circle cx="16.5" cy="18.500" r="12.500"/><circle cx="45.5" cy="18.500" r="12.500"/><circle cx="74.5" cy="18.500" r="12.500"/></svg></td><td class="c9"><div class="links"><a class="lk"><svg class="ic " style="left:4px;top:1px;width:16px;height:16px" viewBox="1343 220 16 16"><path d="M1343.900 222.100L1354.350 228.450L1343.900 234.800Z"/></svg></a><a class="lk"><svg class="ic " style="left:23px;top:1px;width:16px;height:16px" viewBox="1362 220 16 16"><circle cx="1368.600" cy="223.700" r="2.900"/><circle cx="1365.700" cy="225.900" r="2.800"/><circle cx="1371.500" cy="225.900" r="2.800"/><circle cx="1366.500" cy="228.300" r="2.400"/><circle cx="1370.700" cy="228.300" r="2.400"/><circle cx="1368.600" cy="226.500" r="3.600"/><path d="M1367.700 229.500H1369.850V233.500L1370.850 233.900V234.950H1366.750V233.900L1367.700 233.500Z"/></svg></a><a class="lk"><svg class="ic " style="left:42px;top:1px;width:16px;height:16px" viewBox="1381 220 16 16"><polygon points="1390.26,221.24 1390.90,223.76 1393.40,223.05 1392.69,225.55 1395.21,226.19 1393.35,228.00 1395.21,229.81 1392.69,230.45 1393.40,232.95 1390.90,232.24 1390.26,234.76 1388.45,232.90 1386.64,234.76 1386.00,232.24 1383.50,232.95 1384.21,230.45 1381.69,229.81 1383.55,228.00 1381.69,226.19 1384.21,225.55 1383.50,223.05 1386.00,223.76 1386.64,221.24 1388.45,223.10"/></svg></a><a class="lk"><svg class="ic " style="left:63px;top:1px;width:16px;height:16px" viewBox="1402 220 16 16"><path d="M1402.700 234.800v-4.600a1.100 1.100 0 0 1 1.100-1.100h1.300a1.100 1.100 0 0 1 1.100 1.100v4.600z M1407.300 234.800v-11.400a1.300 1.300 0 0 1 1.300-1.300h1.200a1.300 1.300 0 0 1 1.300 1.300v11.400z M1412 234.800v-8a1.100 1.100 0 0 1 1.100-1.100h1.600a1.100 1.100 0 0 1 1.100 1.100v8z"/></svg></a><a class="lk"><svg class="ic " style="left:81px;top:1px;width:16px;height:16px" viewBox="1420 220 16 16"><path d="M1421.100 223.100h4.700v4.900h3.300v6.800h-8z M1426.700 224.200l2.400 2.900h-2.400z M1427 220.800H1432.100V226H1435V232.700H1430.600V225.600L1427 221.100z M1433.300 222.200l1.700 2.300h-1.700z"/></svg></a><a class="lk"><svg class="ic " style="left:102px;top:1px;width:16px;height:16px" viewBox="1441 220 16 16"><rect x="1447" y="221.100" width="3.200" height="12.700" rx="1.600"/><path d="M1448.600 226.800L1442.700 231.400M1448.600 226.800L1454.500 231.400" fill="none" stroke="currentColor" stroke-width="2.100" stroke-linecap="round"/><path d="M1448.600 232.700L1446.300 234.400M1448.600 232.700L1450.900 234.400" fill="none" stroke="currentColor" stroke-width="1.600" stroke-linecap="round"/></svg></a><a class="lk"><svg class="ic " style="left:121px;top:1px;width:16px;height:16px" viewBox="1460 220 16 16"><rect x="1460.5" y="222.1" width="8.4" height="2.200" rx="0.35"/><rect x="1460.5" y="225.75" width="13.3" height="2.200" rx="0.35"/><rect x="1460.5" y="229.15" width="10.6" height="2.200" rx="0.35"/><rect x="1460.5" y="232.75" width="14.4" height="2.200" rx="0.35"/></svg></a><a class="lk"><svg class="ic " style="left:143px;top:1px;width:16px;height:16px" viewBox="1482 220 16 16"><path d="M1489.900 220.800L1482.800 228.500H1486.800L1485 235.100L1492.300 226.900H1488.300z"/></svg></a><a class="lk"><svg class="ic " style="left:161px;top:1px;width:16px;height:16px" viewBox="1500 220 16 16"><rect x="1500.4" y="222.1" width="14.2" height="2.200" rx="0.35"/><rect x="1500.4" y="225.75" width="14.2" height="2.200" rx="0.35"/><rect x="1500.4" y="229.15" width="14.2" height="2.200" rx="0.35"/><rect x="1500.4" y="232.75" width="14.2" height="2.200" rx="0.35"/></svg></a><a class="lk"><svg class="ic " style="left:181px;top:1px;width:16px;height:16px" viewBox="1520 220 16 16"><path d="M1521.500 227.900a5.700 5.700 0 0 1 10.300-3.300" fill="none" stroke="currentColor" stroke-width="1.900"/><path d="M1533.200 221v4.800h-4.800z"/><path d="M1532.900 228a5.700 5.700 0 0 1-10.300 3.300" fill="none" stroke="currentColor" stroke-width="1.900"/><path d="M1521.200 234.900v-4.800h4.800z"/></svg></a><a class="lk"><svg class="ic trash" style="left:201px;top:0px;width:16px;height:17px" viewBox="1540 219 16 17"><path d="M1544.700 222.400v-2h5v2" fill="none" stroke="currentColor" stroke-width="1"/><rect x="1541" y="222" width="12.900" height="1.100"/><path d="M1542.550 225.450h9.700v8a1 1 0 0 1-1 1h-7.700a1 1 0 0 1-1-1z" fill="none" stroke="currentColor" stroke-width="1.150"/><path d="M1544.800 225.500v9M1547.300 225.500v9M1549.700 225.500v9" fill="none" stroke="currentColor" stroke-width="1.200"/></svg></a></div></td></tr>
<tr><td class="c1"><a><svg class="ic edit" style="width:16px;height:15px" viewBox="0 0 16 15"><path d="M9.700 1.550H3.950A2.400 2.400 0 0 0 1.550 3.950v5.750A2.400 2.400 0 0 0 3.950 12.100h6.550A2.400 2.400 0 0 0 12.900 9.700V5.700" fill="none" stroke="currentColor" stroke-width="2.250"/><path d="M5.500 9.200L6.100 7.200L11.200 2.700L12.700 4.300L7.600 8.800Z M13.900 -0.100L15.200 1.200L13.900 2.500L12.600 1.200Z"/></svg></a></td><td class="c2"><div class="tog off"><span class="knob"></span><span class="tx">Off</span></div></td><td class="c3"><a class="dag">example_short_circuit_operator</a><span class="label tag">example</span></td><td class="c4"><span class="label sch">1 day, 0:00:00</span></td><td class="c5">airflow</td><td class="c6"><svg class="circs" width="300" height="36" viewBox="0 0 300 36"><circle cx="16.5" cy="18.500" r="12.500"/><circle cx="45.5" cy="18.500" r="12.500"/><circle cx="74.5" cy="18.500" r="12.500"/><circle cx="103.5" cy="18.500" r="12.500"/><circle cx="132.5" cy="18.500" r="12.500"/><circle cx="161.5" cy="18.500" r="12.500"/><circle cx="190.5" cy="18.500" r="12.500"/><circle cx="219.5" cy="18.500" r="12.500"/><circle cx="248.5" cy="18.500" r="12.500"/><circle cx="277.5" cy="18.500" r="12.500"/></svg></td><td class="c7"></td><td class="c8"><svg class="circs" width="100" height="36" viewBox="0 0 100 36"><circle cx="16.5" cy="18.500" r="12.500"/><circle cx="45.5" cy="18.500" r="12.500"/><circle cx="74.5" cy="18.500" r="12.500"/></svg></td><td class="c9"><div class="links"><a class="lk"><svg class="ic " style="left:4px;top:1px;width:16px;height:16px" viewBox="1343 220 16 16"><path d="M1343.900 222.100L1354.350 228.450L1343.900 234.800Z"/></svg></a><a class="lk"><svg class="ic " style="left:23px;top:1px;width:16px;height:16px" viewBox="1362 220 16 16"><circle cx="1368.600" cy="223.700" r="2.900"/><circle cx="1365.700" cy="225.900" r="2.800"/><circle cx="1371.500" cy="225.900" r="2.800"/><circle cx="1366.500" cy="228.300" r="2.400"/><circle cx="1370.700" cy="228.300" r="2.400"/><circle cx="1368.600" cy="226.500" r="3.600"/><path d="M1367.700 229.500H1369.850V233.500L1370.850 233.900V234.950H1366.750V233.900L1367.700 233.500Z"/></svg></a><a class="lk"><svg class="ic " style="left:42px;top:1px;width:16px;height:16px" viewBox="1381 220 16 16"><polygon points="1390.26,221.24 1390.90,223.76 1393.40,223.05 1392.69,225.55 1395.21,226.19 1393.35,228.00 1395.21,229.81 1392.69,230.45 1393.40,232.95 1390.90,232.24 1390.26,234.76 1388.45,232.90 1386.64,234.76 1386.00,232.24 1383.50,232.95 1384.21,230.45 1381.69,229.81 1383.55,228.00 1381.69,226.19 1384.21,225.55 1383.50,223.05 1386.00,223.76 1386.64,221.24 1388.45,223.10"/></svg></a><a class="lk"><svg class="ic " style="left:63px;top:1px;width:16px;height:16px" viewBox="1402 220 16 16"><path d="M1402.700 234.800v-4.600a1.100 1.100 0 0 1 1.100-1.100h1.300a1.100 1.100 0 0 1 1.100 1.100v4.600z M1407.300 234.800v-11.400a1.300 1.300 0 0 1 1.300-1.300h1.200a1.300 1.300 0 0 1 1.300 1.300v11.400z M1412 234.800v-8a1.100 1.100 0 0 1 1.100-1.100h1.600a1.100 1.100 0 0 1 1.100 1.100v8z"/></svg></a><a class="lk"><svg class="ic " style="left:81px;top:1px;width:16px;height:16px" viewBox="1420 220 16 16"><path d="M1421.100 223.100h4.700v4.900h3.300v6.800h-8z M1426.700 224.200l2.400 2.900h-2.400z M1427 220.800H1432.100V226H1435V232.700H1430.600V225.600L1427 221.100z M1433.300 222.200l1.700 2.300h-1.700z"/></svg></a><a class="lk"><svg class="ic " style="left:102px;top:1px;width:16px;height:16px" viewBox="1441 220 16 16"><rect x="1447" y="221.100" width="3.200" height="12.700" rx="1.600"/><path d="M1448.600 226.800L1442.700 231.400M1448.600 226.800L1454.500 231.400" fill="none" stroke="currentColor" stroke-width="2.100" stroke-linecap="round"/><path d="M1448.600 232.700L1446.300 234.400M1448.600 232.700L1450.900 234.400" fill="none" stroke="currentColor" stroke-width="1.600" stroke-linecap="round"/></svg></a><a class="lk"><svg class="ic " style="left:121px;top:1px;width:16px;height:16px" viewBox="1460 220 16 16"><rect x="1460.5" y="222.1" width="8.4" height="2.200" rx="0.35"/><rect x="1460.5" y="225.75" width="13.3" height="2.200" rx="0.35"/><rect x="1460.5" y="229.15" width="10.6" height="2.200" rx="0.35"/><rect x="1460.5" y="232.75" width="14.4" height="2.200" rx="0.35"/></svg></a><a class="lk"><svg class="ic " style="left:143px;top:1px;width:16px;height:16px" viewBox="1482 220 16 16"><path d="M1489.900 220.800L1482.800 228.500H1486.800L1485 235.100L1492.300 226.900H1488.300z"/></svg></a><a class="lk"><svg class="ic " style="left:161px;top:1px;width:16px;height:16px" viewBox="1500 220 16 16"><rect x="1500.4" y="222.1" width="14.2" height="2.200" rx="0.35"/><rect x="1500.4" y="225.75" width="14.2" height="2.200" rx="0.35"/><rect x="1500.4" y="229.15" width="14.2" height="2.200" rx="0.35"/><rect x="1500.4" y="232.75" width="14.2" height="2.200" rx="0.35"/></svg></a><a class="lk"><svg class="ic " style="left:181px;top:1px;width:16px;height:16px" viewBox="1520 220 16 16"><path d="M1521.500 227.900a5.700 5.700 0 0 1 10.300-3.300" fill="none" stroke="currentColor" stroke-width="1.900"/><path d="M1533.200 221v4.800h-4.800z"/><path d="M1532.900 228a5.700 5.700 0 0 1-10.300 3.300" fill="none" stroke="currentColor" stroke-width="1.900"/><path d="M1521.200 234.900v-4.800h4.800z"/></svg></a><a class="lk"><svg class="ic trash" style="left:201px;top:0px;width:16px;height:17px" viewBox="1540 219 16 17"><path d="M1544.700 222.400v-2h5v2" fill="none" stroke="currentColor" stroke-width="1"/><rect x="1541" y="222" width="12.900" height="1.100"/><path d="M1542.550 225.450h9.700v8a1 1 0 0 1-1 1h-7.700a1 1 0 0 1-1-1z" fill="none" stroke="currentColor" stroke-width="1.150"/><path d="M1544.800 225.500v9M1547.300 225.500v9M1549.700 225.500v9" fill="none" stroke="currentColor" stroke-width="1.200"/></svg></a></div></td></tr>
<tr><td class="c1"><a><svg class="ic edit" style="width:16px;height:15px" viewBox="0 0 16 15"><path d="M9.700 1.550H3.950A2.400 2.400 0 0 0 1.550 3.950v5.750A2.400 2.400 0 0 0 3.950 12.100h6.550A2.400 2.400 0 0 0 12.900 9.700V5.700" fill="none" stroke="currentColor" stroke-width="2.250"/><path d="M5.500 9.200L6.100 7.200L11.200 2.700L12.700 4.300L7.600 8.800Z M13.900 -0.100L15.200 1.200L13.900 2.500L12.600 1.200Z"/></svg></a></td><td class="c2"><div class="tog off"><span class="knob"></span><span class="tx">Off</span></div></td><td class="c3"><a class="dag">example_skip_dag</a><span class="label tag">example</span></td><td class="c4"><span class="label sch">1 day, 0:00:00</span></td><td class="c5">airflow</td><td class="c6"><svg class="circs" width="300" height="36" viewBox="0 0 300 36"><circle cx="16.5" cy="18.500" r="12.500"/><circle cx="45.5" cy="18.500" r="12.500"/><circle cx="74.5" cy="18.500" r="12.500"/><circle cx="103.5" cy="18.500" r="12.500"/><circle cx="132.5" cy="18.500" r="12.500"/><circle cx="161.5" cy="18.500" r="12.500"/><circle cx="190.5" cy="18.500" r="12.500"/><circle cx="219.5" cy="18.500" r="12.500"/><circle cx="248.5" cy="18.500" r="12.500"/><circle cx="277.5" cy="18.500" r="12.500"/></svg></td><td class="c7"></td><td class="c8"><svg class="circs" width="100" height="36" viewBox="0 0 100 36"><circle cx="16.5" cy="18.500" r="12.500"/><circle cx="45.5" cy="18.500" r="12.500"/><circle cx="74.5" cy="18.500" r="12.500"/></svg></td><td class="c9"><div class="links"><a class="lk"><svg class="ic " style="left:4px;top:1px;width:16px;height:16px" viewBox="1343 220 16 16"><path d="M1343.900 222.100L1354.350 228.450L1343.900 234.800Z"/></svg></a><a class="lk"><svg class="ic " style="left:23px;top:1px;width:16px;height:16px" viewBox="1362 220 16 16"><circle cx="1368.600" cy="223.700" r="2.900"/><circle cx="1365.700" cy="225.900" r="2.800"/><circle cx="1371.500" cy="225.900" r="2.800"/><circle cx="1366.500" cy="228.300" r="2.400"/><circle cx="1370.700" cy="228.300" r="2.400"/><circle cx="1368.600" cy="226.500" r="3.600"/><path d="M1367.700 229.500H1369.850V233.500L1370.850 233.900V234.950H1366.750V233.900L1367.700 233.500Z"/></svg></a><a class="lk"><svg class="ic " style="left:42px;top:1px;width:16px;height:16px" viewBox="1381 220 16 16"><polygon points="1390.26,221.24 1390.90,223.76 1393.40,223.05 1392.69,225.55 1395.21,226.19 1393.35,228.00 1395.21,229.81 1392.69,230.45 1393.40,232.95 1390.90,232.24 1390.26,234.76 1388.45,232.90 1386.64,234.76 1386.00,232.24 1383.50,232.95 1384.21,230.45 1381.69,229.81 1383.55,228.00 1381.69,226.19 1384.21,225.55 1383.50,223.05 1386.00,223.76 1386.64,221.24 1388.45,223.10"/></svg></a><a class="lk"><svg class="ic " style="left:63px;top:1px;width:16px;height:16px" viewBox="1402 220 16 16"><path d="M1402.700 234.800v-4.600a1.100 1.100 0 0 1 1.100-1.100h1.300a1.100 1.100 0 0 1 1.100 1.100v4.600z M1407.300 234.800v-11.400a1.300 1.300 0 0 1 1.300-1.300h1.200a1.300 1.300 0 0 1 1.300 1.300v11.400z M1412 234.800v-8a1.100 1.100 0 0 1 1.100-1.100h1.600a1.100 1.100 0 0 1 1.100 1.100v8z"/></svg></a><a class="lk"><svg class="ic " style="left:81px;top:1px;width:16px;height:16px" viewBox="1420 220 16 16"><path d="M1421.100 223.100h4.700v4.900h3.300v6.800h-8z M1426.700 224.200l2.400 2.900h-2.400z M1427 220.800H1432.100V226H1435V232.700H1430.600V225.600L1427 221.100z M1433.300 222.200l1.700 2.300h-1.700z"/></svg></a><a class="lk"><svg class="ic " style="left:102px;top:1px;width:16px;height:16px" viewBox="1441 220 16 16"><rect x="1447" y="221.100" width="3.200" height="12.700" rx="1.600"/><path d="M1448.600 226.800L1442.700 231.400M1448.600 226.800L1454.500 231.400" fill="none" stroke="currentColor" stroke-width="2.100" stroke-linecap="round"/><path d="M1448.600 232.700L1446.300 234.400M1448.600 232.700L1450.900 234.400" fill="none" stroke="currentColor" stroke-width="1.600" stroke-linecap="round"/></svg></a><a class="lk"><svg class="ic " style="left:121px;top:1px;width:16px;height:16px" viewBox="1460 220 16 16"><rect x="1460.5" y="222.1" width="8.4" height="2.200" rx="0.35"/><rect x="1460.5" y="225.75" width="13.3" height="2.200" rx="0.35"/><rect x="1460.5" y="229.15" width="10.6" height="2.200" rx="0.35"/><rect x="1460.5" y="232.75" width="14.4" height="2.200" rx="0.35"/></svg></a><a class="lk"><svg class="ic " style="left:143px;top:1px;width:16px;height:16px" viewBox="1482 220 16 16"><path d="M1489.900 220.800L1482.800 228.500H1486.800L1485 235.100L1492.300 226.900H1488.300z"/></svg></a><a class="lk"><svg class="ic " style="left:161px;top:1px;width:16px;height:16px" viewBox="1500 220 16 16"><rect x="1500.4" y="222.1" width="14.2" height="2.200" rx="0.35"/><rect x="1500.4" y="225.75" width="14.2" height="2.200" rx="0.35"/><rect x="1500.4" y="229.15" width="14.2" height="2.200" rx="0.35"/><rect x="1500.4" y="232.75" width="14.2" height="2.200" rx="0.35"/></svg></a><a class="lk"><svg class="ic " style="left:181px;top:1px;width:16px;height:16px" viewBox="1520 220 16 16"><path d="M1521.500 227.900a5.700 5.700 0 0 1 10.300-3.300" fill="none" stroke="currentColor" stroke-width="1.900"/><path d="M1533.200 221v4.800h-4.800z"/><path d="M1532.900 228a5.700 5.700 0 0 1-10.300 3.300" fill="none" stroke="currentColor" stroke-width="1.900"/><path d="M1521.200 234.900v-4.800h4.800z"/></svg></a><a class="lk"><svg class="ic trash" style="left:201px;top:0px;width:16px;height:17px" viewBox="1540 219 16 17"><path d="M1544.700 222.400v-2h5v2" fill="none" stroke="currentColor" stroke-width="1"/><rect x="1541" y="222" width="12.900" height="1.100"/><path d="M1542.550 225.450h9.700v8a1 1 0 0 1-1 1h-7.700a1 1 0 0 1-1-1z" fill="none" stroke="currentColor" stroke-width="1.150"/><path d="M1544.800 225.500v9M1547.300 225.500v9M1549.700 225.500v9" fill="none" stroke="currentColor" stroke-width="1.200"/></svg></a></div></td></tr>
  </tbody>
 </table>
</div>
<div class="rightcol"></div><div class="bottombar"></div>
</body></html>
